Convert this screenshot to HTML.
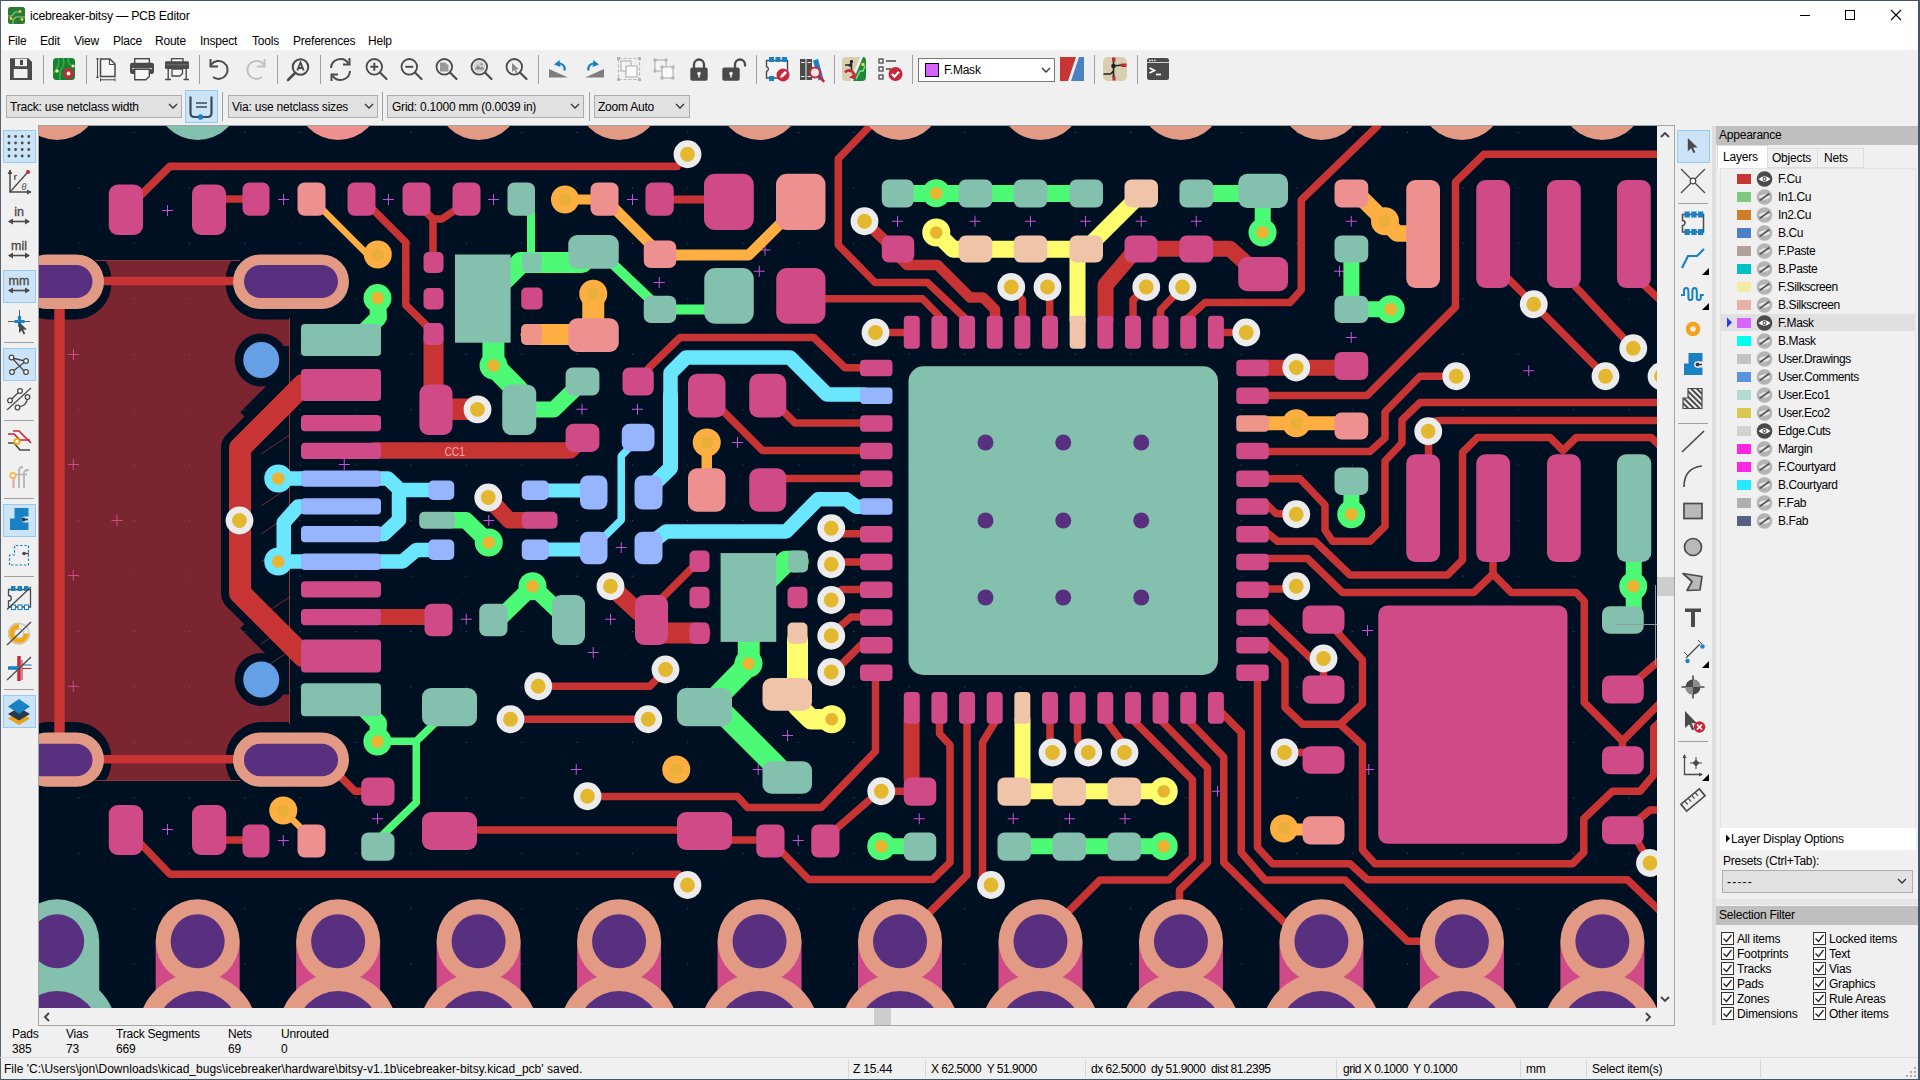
<!DOCTYPE html>
<html><head><meta charset="utf-8"><title>icebreaker-bitsy — PCB Editor</title><style>
*{box-sizing:border-box}
html,body{margin:0;padding:0}
body{width:1920px;height:1080px;overflow:hidden;background:#f0f0f0;font-family:"Liberation Sans",sans-serif;font-size:12px;color:#000;position:relative}
.a{position:absolute}
.t{position:absolute;white-space:nowrap;line-height:14px;font-size:12px;letter-spacing:-0.22px}
#title{left:0;top:0;width:1920px;height:30px;background:#fff}
#menu{left:0;top:30px;width:1920px;height:20px;background:#fff}
#cvw{left:39px;top:126px;width:1618px;height:882px;overflow:hidden;background:#001023}
.sep{position:absolute;width:1px;background:#a0a0a0}
.hsep{position:absolute;height:1px;background:#a0a0a0}
.combo{position:absolute;border:1px solid #adadad;background:#e1e1e1;height:23px}
.sel{position:absolute;background:#cce4f7;border:1px solid #99c9ef}
.chk{position:absolute;width:13px;height:13px;border:1px solid #333;background:#fff}
.sw{position:absolute;width:14px;height:10px}
</style></head><body>
<div class="a" id="title"></div><div class="a" id="menu"></div>
<div class="a" style="left:0;top:0;width:1920px;height:1px;background:#42566e"></div>
<div class="a" style="left:1918px;top:0;width:2px;height:1080px;background:#42566e"></div>
<div class="a" style="left:0;top:0;width:1px;height:1080px;background:#566272"></div>
<div class="a" style="left:0;top:1079px;width:1920px;height:1px;background:#42566e"></div>
<svg class="a" style="left:8px;top:7px" width="17" height="17" viewBox="0 0 17 17"><rect width="17" height="17" rx="2.500" fill="#2a7a36"/><path d="M0 9h4l3-4h4M5 17v-4l3-3h9" fill="none" stroke="#8fd07a" stroke-width="1.200"/><circle cx="3" cy="11.500" r="1.400" fill="#f2c94a"/><circle cx="12" cy="4.500" r="1.400" fill="#f2c94a"/><circle cx="14" cy="12.500" r="1.400" fill="#f2c94a"/></svg>
<div class="t" style="left:30px;top:9px;font-size:12.3px;letter-spacing:-0.25px">icebreaker-bitsy — PCB Editor</div>
<svg class="a" style="left:1790px;top:5px" width="120" height="20" viewBox="1790 5 120 20"><path d="M1800 15.5h10" stroke="#000" stroke-width="1"/><rect x="1845.5" y="10.5" width="9" height="9" fill="none" stroke="#000"/><path d="M1891 10l10 10M1901 10l-10 10" stroke="#000" stroke-width="1.1"/></svg>
<div class="t" style="left:8px;top:34px;">File</div>
<div class="t" style="left:40px;top:34px;">Edit</div>
<div class="t" style="left:74px;top:34px;">View</div>
<div class="t" style="left:113px;top:34px;">Place</div>
<div class="t" style="left:155px;top:34px;">Route</div>
<div class="t" style="left:200px;top:34px;">Inspect</div>
<div class="t" style="left:252px;top:34px;">Tools</div>
<div class="t" style="left:293px;top:34px;">Preferences</div>
<div class="t" style="left:368px;top:34px;">Help</div>
<div class="sep" style="left:43px;top:55px;height:29px"></div>
<div class="sep" style="left:86px;top:55px;height:29px"></div>
<div class="sep" style="left:199px;top:55px;height:29px"></div>
<div class="sep" style="left:277px;top:55px;height:29px"></div>
<div class="sep" style="left:320px;top:55px;height:29px"></div>
<div class="sep" style="left:538px;top:55px;height:29px"></div>
<div class="sep" style="left:756px;top:55px;height:29px"></div>
<div class="sep" style="left:834px;top:55px;height:29px"></div>
<div class="sep" style="left:912px;top:55px;height:29px"></div>
<div class="sep" style="left:1094px;top:55px;height:29px"></div>
<div class="sep" style="left:1137px;top:55px;height:29px"></div>
<div class="sep" style="left:222px;top:92px;height:29px"></div>
<div class="sep" style="left:382px;top:92px;height:29px"></div>
<div class="sep" style="left:589px;top:92px;height:29px"></div>
<svg class="a" style="left:0;top:50px" width="1200" height="40" viewBox="0 50 1200 40"><g transform="translate(10 58)"><path d="M0 0.300H18.300L22 4V22H0z" fill="#4a4a4a"/><rect x="5" y="0.800" width="12" height="7.400" fill="#f0f0f0"/><rect x="10" y="2" width="3" height="5" fill="#4a4a4a"/><rect x="3.750" y="11" width="13.750" height="9" fill="#f0f0f0"/></g><g transform="translate(53 58)"><rect x="0" y="0" width="22" height="22" rx="3.500" fill="#15822c"/><path d="M5 0q2 5 -1 10t-4 6M10 0q2 6 -1 10t-2 12M15.500 0q-1 4 1 6t5.500 2" stroke="#3fa550" stroke-width="1.600" fill="none"/><circle cx="4" cy="13" r="1.700" fill="#f5e9a0"/><circle cx="20" cy="8" r="1.500" fill="#f5e9a0"/><circle cx="15.500" cy="15.500" r="4.300" fill="none" stroke="#c8283c" stroke-width="3.400" stroke-dasharray="2.250 1.120"/><circle cx="15.500" cy="15.500" r="3.300" fill="none" stroke="#c8283c" stroke-width="2.200"/><circle cx="15.500" cy="15.500" r="1.900" fill="#f5f0e8"/></g><g transform="translate(96 58)"><path d="M4.500 1H14l5 5V18.500H4.500z" fill="#f6f6f6" stroke="#4a4a4a" stroke-width="1.500"/><path d="M13.500 1v5.500h5.500" fill="none" stroke="#4a4a4a" stroke-width="1.100"/><path d="M1.500 0.500V19.500M0 0.800h3M0 19.200h3M4.500 21.800H19M4.500 20.300v3M19 20.300v3" stroke="#4a4a4a" stroke-width="1" fill="none"/></g><g transform="translate(130 58)"><rect x="4.700" y="0.700" width="14.600" height="6" fill="#f6f6f6" stroke="#4a4a4a" stroke-width="1.400"/><rect x="0" y="4.700" width="24" height="11.300" rx="2.200" fill="#4a4a4a"/><path d="M2 10.600h20" stroke="#f0f0f0" stroke-width="0.900"/><path d="M4.700 11.300H19.300V18.500l-3.500 3.300H4.700z" fill="#f6f6f6" stroke="#4a4a4a" stroke-width="1.400"/></g><g transform="translate(165 58)"><rect x="6.500" y="0.700" width="11.500" height="4" fill="#f6f6f6" stroke="#4a4a4a" stroke-width="1.300"/><rect x="0" y="3.300" width="24" height="7.700" rx="1.300" fill="#4a4a4a"/><path d="M1 6.800h22" stroke="#7a7a7a" stroke-width="0.800"/><path d="M7 11H17.500V15.500l-2.500 2.500H7z" fill="#f6f6f6" stroke="#4a4a4a" stroke-width="1.300"/><path d="M3.200 11V21.500M21.200 11V21.500M0 21.500h6M18.500 21.500h5.500" stroke="#4a4a4a" stroke-width="1.400" fill="none"/></g><g transform="translate(208 58)"><path d="M3 7A9 9 0 1 1 5 19" fill="none" stroke="#4a4a4a" stroke-width="2" /><path d="M2.5 1v7.5h7.5" fill="none" stroke="#4a4a4a" stroke-width="2"/></g><g transform="translate(245 58)"><path d="M19 7A9 9 0 1 0 17 19" fill="none" stroke="#c0c0c0" stroke-width="2" /><path d="M19.5 1v7.5h-7.5" fill="none" stroke="#c0c0c0" stroke-width="2"/></g><g transform="translate(287 58)"><circle cx="13.5" cy="9" r="7.8" fill="none" stroke="#4a4a4a" stroke-width="2"/><path d="M8 15l-7 7" stroke="#4a4a4a" stroke-width="2.6" stroke-linecap="round"/><path d="M10.300 12.500l3.200-8 3.200 8M11.400 10h4.200" fill="none" stroke="#4a4a4a" stroke-width="1.900"/></g><g transform="translate(329 58)"><path d="M2 10A9.5 9.5 0 0 1 19.5 5.5M21 13A9.5 9.5 0 0 1 3.5 17.5" fill="none" stroke="#4a4a4a" stroke-width="2"/><path d="M20.5 0v6.5h-6.5M2.500 23v-6.5h6.5" fill="none" stroke="#4a4a4a" stroke-width="2"/></g><g transform="translate(365 58)"><circle cx="9.3" cy="8.800" r="7.800" fill="none" stroke="#4a4a4a" stroke-width="1.800"/><path d="M15 14.500l6.500 6.500" stroke="#4a4a4a" stroke-width="2.100" stroke-linecap="round"/><path d="M5.300 8.800h8M9.300 4.800v8" stroke="#4a4a4a" stroke-width="2"/></g><g transform="translate(400 58)"><circle cx="9.3" cy="8.800" r="7.800" fill="none" stroke="#4a4a4a" stroke-width="1.800"/><path d="M15 14.500l6.500 6.500" stroke="#4a4a4a" stroke-width="2.100" stroke-linecap="round"/><path d="M5.300 8.800h8" stroke="#4a4a4a" stroke-width="2"/></g><g transform="translate(435 58)"><circle cx="9.3" cy="8.800" r="7.800" fill="none" stroke="#4a4a4a" stroke-width="1.800"/><path d="M15 14.500l6.500 6.500" stroke="#4a4a4a" stroke-width="2.100" stroke-linecap="round"/><path d="M5 4.500h5.500l3 3V13.500H5z" fill="#9a9a9a"/></g><g transform="translate(470 58)"><circle cx="9.3" cy="8.800" r="7.800" fill="none" stroke="#4a4a4a" stroke-width="1.800"/><path d="M15 14.500l6.500 6.500" stroke="#4a4a4a" stroke-width="2.100" stroke-linecap="round"/><circle cx="9.300" cy="8.800" r="5.800" fill="#d0d0d0"/><path d="M4.500 11.500l3.500-4.500 2.500 3 1.500-1.500 2.500 3z" fill="#8a8a8a"/><circle cx="11.500" cy="6.300" r="1.100" fill="#8a8a8a"/></g><g transform="translate(505 58)"><circle cx="9.3" cy="8.800" r="7.800" fill="none" stroke="#4a4a4a" stroke-width="1.800"/><path d="M15 14.500l6.500 6.500" stroke="#4a4a4a" stroke-width="2.100" stroke-linecap="round"/><path d="M7 5v9l2.300-2.200 1.600 3.400 1.500-.7-1.600-3.300h3.200z" fill="#8a8a8a"/></g><g transform="translate(548 58)"><path d="M1 19.500h19L1 11z" fill="#7e7e7e"/><path d="M16.500 12.500A5.500 5.500 0 0 0 9.500 5.800" fill="none" stroke="#1a81c4" stroke-width="2.200"/><path d="M11.500 2L6 6.500l6.500 2.500z" fill="#1a81c4"/></g><g transform="translate(584 58)"><path d="M20 19.500H1L20 11z" fill="#7e7e7e"/><path d="M4.500 12.500A5.500 5.500 0 0 1 11.500 5.800" fill="none" stroke="#1a81c4" stroke-width="2.200"/><path d="M9.500 2l5.500 4.500-6.500 2.500z" fill="#1a81c4"/></g><g transform="translate(617 57)"><rect x="1.500" y="1.500" width="21" height="21" fill="none" stroke="#b4b4b4" stroke-width="1.200" stroke-dasharray="3 2"/><rect x="4" y="4" width="10" height="10" fill="#f4f4f4" stroke="#b4b4b4" stroke-width="1.200"/><rect x="9" y="9" width="11" height="11" fill="#fafafa" stroke="#b4b4b4" stroke-width="1.200"/><g fill="#b4b4b4"><rect x="0" y="0" width="3" height="3"/><rect x="21" y="0" width="3" height="3"/><rect x="0" y="21" width="3" height="3"/><rect x="21" y="21" width="3" height="3"/></g></g><g transform="translate(653 58)"><rect x="2" y="2" width="11" height="11" fill="#f4f4f4" stroke="#b4b4b4" stroke-width="1.200"/><rect x="9" y="9" width="11" height="11" fill="#fafafa" stroke="#b4b4b4" stroke-width="1.200"/><g fill="#b4b4b4"><rect x="0.500" y="0.500" width="3" height="3"/><rect x="11.500" y="0.500" width="3" height="3"/><rect x="0.500" y="11.500" width="3" height="3"/><rect x="7.500" y="7.500" width="3" height="3"/><rect x="18.500" y="7.500" width="3" height="3"/><rect x="7.500" y="18.500" width="3" height="3"/><rect x="18.500" y="18.500" width="3" height="3"/></g></g><g transform="translate(689 58)"><path d="M5 10V6.500a5 5 0 0 1 10 0V10" fill="none" stroke="#4a4a4a" stroke-width="2.300"/><rect x="1.300" y="9.500" width="17.400" height="13.200" rx="2" fill="#4a4a4a"/><circle cx="10" cy="15.500" r="1.800" fill="#f0f0f0"/><rect x="9.200" y="15.500" width="1.600" height="4" fill="#f0f0f0"/></g><g transform="translate(721 58)"><path d="M14 10V6.500a5 5 0 0 1 10 0V8.500" fill="none" stroke="#4a4a4a" stroke-width="2.300"/><rect x="1.300" y="9.500" width="17.400" height="13.200" rx="2" fill="#4a4a4a"/><circle cx="10" cy="15.500" r="1.800" fill="#f0f0f0"/><rect x="9.200" y="15.500" width="1.600" height="4" fill="#f0f0f0"/></g><g transform="translate(764 57)"><path d="M2.500 3.500h21V21h-21v-6.500a2.600 2.600 0 0 0 0-5z" fill="#f4f4f4" stroke="#4a4a4a" stroke-width="1.400"/><g fill="#1a81c4"><rect x="5" y="0" width="5" height="5"/><rect x="11.500" y="0" width="5" height="5"/><rect x="18" y="0" width="5" height="5"/><rect x="5" y="19" width="5" height="5"/></g><circle cx="19" cy="18" r="6.500" fill="#c8283c"/><path d="M16 21l1-3 4-4 2 2-4 4z" fill="#fff"/></g><g transform="translate(800 58)"><rect x="0" y="1" width="5.500" height="21" fill="#4a4a4a"/><rect x="6.500" y="1" width="5.500" height="21" fill="#4a4a4a"/><path d="M13 2.500l5-1.500 5.500 20-5 1.500z" fill="#1a81c4"/><path d="M1 4.500h3.500M7.500 4.500h3.500M1 18.500h3.500M7.500 18.500h3.500" stroke="#f0f0f0" stroke-width="1.200"/><circle cx="15" cy="14.500" r="5" fill="#fbe4e8" stroke="#c8283c" stroke-width="2"/><path d="M19 18.500l4.500 4.500" stroke="#c8283c" stroke-width="2.600" stroke-linecap="round"/></g><g transform="translate(842 57)"><path d="M0 4Q0 0 4 0H19L9 24H4Q0 24 0 20z" fill="#d8ceb0"/><path d="M21 0q3 0 3 4V20q0 4-4 4H11z" fill="#1e8a3a"/><path d="M19 0l-10 24" stroke="#f0f0f0" stroke-width="1.500"/><path d="M3 8h4M9.500 3v10M9.500 6l-3 3M9.500 10l-3-2" stroke="#222" stroke-width="1.500" fill="none"/><circle cx="9.500" cy="4.500" r="1.600" fill="#222"/><path d="M14 22l4-8h3l2-5" stroke="#8fe08f" stroke-width="1.300" fill="none"/><circle cx="21" cy="7.500" r="1.700" fill="#f2d94a"/><path d="M3 15.500a5 5 0 0 1 9 3" fill="none" stroke="#c8283c" stroke-width="2.600"/><path d="M14 16l-1 6.500-6-2z" fill="#c8283c"/></g><g transform="translate(878 58)"><g fill="none" stroke="#4a4a4a" stroke-width="1.300"><rect x="1" y="1" width="4" height="4"/><rect x="1" y="9" width="4" height="4"/><rect x="1" y="17" width="4" height="4"/><path d="M8 3h10M8 11h5"/></g><circle cx="17.500" cy="16" r="7" fill="#c8283c"/><path d="M14 16l2.500 2.700 4.500-5" fill="none" stroke="#fff" stroke-width="2.200"/></g><g transform="translate(1060 57)"><path d="M0 0h16L8 24H0z" fill="#c83434"/><path d="M19 0h5v24H11z" fill="#4d7fc4"/></g><g transform="translate(1103 57)"><rect x="0" y="0" width="24" height="24" rx="5" fill="#d8ceb0"/><path d="M0.500 17h7M10.500 3.500V21M10.500 9l8.500-1M10.500 14l-3 3M10.500 17l0.500 4" stroke="#222" stroke-width="1.600" fill="none"/><circle cx="10.500" cy="9" r="2.300" fill="#222"/><rect x="9" y="0.500" width="3.500" height="4" fill="#c8283c"/><rect x="18" y="6.500" width="5.500" height="3.500" fill="#c8283c"/><rect x="9.500" y="19.500" width="3" height="4" fill="#c8283c"/></g><g transform="translate(1147 58)"><rect x="0" y="0" width="22" height="22" rx="2.500" fill="#4a4a4a"/><path d="M0 4.500h22" stroke="#f0f0f0" stroke-width="0.800"/><path d="M2.500 10l5 2.500-5 2.500" fill="none" stroke="#fff" stroke-width="1.700"/><path d="M9 16.500h5" stroke="#fff" stroke-width="1.700"/><g fill="#f0f0f0"><rect x="2" y="1.700" width="1.500" height="1.500"/><rect x="4.500" y="1.700" width="1.500" height="1.500"/><rect x="7" y="1.700" width="1.500" height="1.500"/></g></g></svg>
<div class="a" style="left:918px;top:58px;width:137px;height:24px;border:1px solid #7a7a7a;background:#fff"></div>
<div class="a" style="left:925px;top:63px;width:14px;height:14px;background:#d864ff;border:1px solid #000"></div>
<div class="t" style="left:944px;top:63px;">F.Mask</div>
<svg class="a" style="left:1041px;top:67px" width="10" height="7" viewBox="0 0 10 7"><path d="M1 1l4 4 4-4" fill="none" stroke="#333" stroke-width="1.3"/></svg>
<div class="combo" style="left:6px;top:95px;width:176px"></div><div class="t" style="left:10px;top:100px;">Track: use netclass width</div><svg class="a" style="left:168px;top:103px" width="10" height="7" viewBox="0 0 10 7"><path d="M1 1l4 4 4-4" fill="none" stroke="#333" stroke-width="1.3"/></svg>
<div class="sel" style="left:185px;top:90px;width:33px;height:33px"></div>
<div class="combo" style="left:228px;top:95px;width:150px"></div><div class="t" style="left:232px;top:100px;">Via: use netclass sizes</div><svg class="a" style="left:364px;top:103px" width="10" height="7" viewBox="0 0 10 7"><path d="M1 1l4 4 4-4" fill="none" stroke="#333" stroke-width="1.3"/></svg>
<div class="combo" style="left:387px;top:95px;width:197px"></div><div class="t" style="left:392px;top:100px;">Grid: 0.1000 mm (0.0039 in)</div><svg class="a" style="left:570px;top:103px" width="10" height="7" viewBox="0 0 10 7"><path d="M1 1l4 4 4-4" fill="none" stroke="#333" stroke-width="1.3"/></svg>
<div class="combo" style="left:594px;top:95px;width:96px"></div><div class="t" style="left:598px;top:100px;">Zoom Auto</div><svg class="a" style="left:675px;top:103px" width="10" height="7" viewBox="0 0 10 7"><path d="M1 1l4 4 4-4" fill="none" stroke="#333" stroke-width="1.3"/></svg>
<svg class="a" style="left:185px;top:90px" width="33" height="33" viewBox="185 90 33 33"><path d="M190.500 96.500V113q0 4 4 4h13q4 0 4-4V96.500" fill="none" stroke="#3a4a5a" stroke-width="2.200"/><path d="M196 103h11M196 107h11" stroke="#3a4a5a" stroke-width="1.300"/><circle cx="200.500" cy="117" r="2.700" fill="#1a81c4"/></svg>
<div class="sel" style="left:3px;top:130px;width:33px;height:33px"></div>
<div class="sel" style="left:3px;top:270px;width:33px;height:33px"></div>
<div class="sel" style="left:3px;top:348px;width:33px;height:33px"></div>
<div class="sel" style="left:3px;top:504px;width:33px;height:33px"></div>
<div class="sel" style="left:3px;top:695px;width:33px;height:33px"></div>
<div class="hsep" style="left:4px;top:342px;width:30px"></div>
<div class="hsep" style="left:4px;top:420px;width:30px"></div>
<div class="hsep" style="left:4px;top:498px;width:30px"></div>
<div class="hsep" style="left:4px;top:576px;width:30px"></div>
<div class="hsep" style="left:4px;top:689px;width:30px"></div>
<svg class="a" style="left:0;top:126px" width="38" height="610" viewBox="0 126 38 610" font-family="Liberation Sans, sans-serif"><circle cx="9.0" cy="136.5" r="1.400" fill="#4a4a4a"/><circle cx="9.0" cy="143.0" r="1.400" fill="#4a4a4a"/><circle cx="9.0" cy="149.5" r="1.400" fill="#4a4a4a"/><circle cx="9.0" cy="156.0" r="1.400" fill="#4a4a4a"/><circle cx="15.6" cy="136.5" r="1.400" fill="#4a4a4a"/><circle cx="15.6" cy="143.0" r="1.400" fill="#4a4a4a"/><circle cx="15.6" cy="149.5" r="1.400" fill="#4a4a4a"/><circle cx="15.6" cy="156.0" r="1.400" fill="#4a4a4a"/><circle cx="22.2" cy="136.5" r="1.400" fill="#4a4a4a"/><circle cx="22.2" cy="143.0" r="1.400" fill="#4a4a4a"/><circle cx="22.2" cy="149.5" r="1.400" fill="#4a4a4a"/><circle cx="22.2" cy="156.0" r="1.400" fill="#4a4a4a"/><circle cx="28.799999999999997" cy="136.5" r="1.400" fill="#4a4a4a"/><circle cx="28.799999999999997" cy="143.0" r="1.400" fill="#4a4a4a"/><circle cx="28.799999999999997" cy="149.5" r="1.400" fill="#4a4a4a"/><circle cx="28.799999999999997" cy="156.0" r="1.400" fill="#4a4a4a"/><path d="M10 170v22h21" fill="none" stroke="#4a4a4a" stroke-width="1.500"/><path d="M10 192l17-19" stroke="#4a4a4a" stroke-width="1.300"/><circle cx="28" cy="172" r="2" fill="#c8283c"/><path d="M7.500 174l2.500-4.500 2.500 4.500zM27 189.500l4.500 2.500-4.500 2.500z" fill="#4a4a4a"/><text x="13.500" y="180" font-size="9" font-weight="bold" fill="#4a4a4a">r</text><text x="21.500" y="190" font-size="9" font-style="italic" fill="#4a4a4a">θ</text><text x="19" y="216" font-size="12.500" fill="#4a4a4a" stroke="#4a4a4a" stroke-width="0.300" text-anchor="middle">in</text><path d="M9 221.5h20" stroke="#4a4a4a" stroke-width="1.600"/><path d="M8 221.5l5-3v6zM30 221.5l-5-3v6z" fill="#4a4a4a"/><text x="19" y="250" font-size="12.500" fill="#4a4a4a" stroke="#4a4a4a" stroke-width="0.300" text-anchor="middle">mil</text><path d="M9 255.5h20" stroke="#4a4a4a" stroke-width="1.600"/><path d="M8 255.5l5-3v6zM30 255.5l-5-3v6z" fill="#4a4a4a"/><text x="19" y="285" font-size="12.500" fill="#4a4a4a" stroke="#4a4a4a" stroke-width="0.300" text-anchor="middle">mm</text><path d="M9 290.5h20" stroke="#4a4a4a" stroke-width="1.600"/><path d="M8 290.5l5-3v6zM30 290.5l-5-3v6z" fill="#4a4a4a"/><path d="M8 321.500h22M19.500 310v22" stroke="#4a4a4a" stroke-width="0.900"/><path d="M19.500 316v11M14.500 321.500h10" stroke="#1a81c4" stroke-width="3.200"/><path d="M19 322v11l2.600-2.500 2 4 1.700-.8-2-4 3.700-.2z" fill="#4a4a4a"/><path d="M12 358l13 14M12 372l14-11M12 358l13 3" stroke="#4a4a4a" stroke-width="1.300"/><g fill="#fff" stroke="#4a4a4a" stroke-width="1.300"><circle cx="11.500" cy="357.500" r="2.300"/><circle cx="26" cy="361" r="2.300"/><circle cx="12" cy="372" r="2.300"/><circle cx="26" cy="372" r="2.300"/></g><path d="M7 410L31 388" stroke="#4a4a4a" stroke-width="1.200"/><path d="M10.500 400l8.500-8M18 407q9-1 9.500-9" fill="none" stroke="#4a4a4a" stroke-width="1.300"/><g fill="#fff" stroke="#4a4a4a" stroke-width="1.300"><circle cx="10" cy="400.500" r="2.300"/><circle cx="20" cy="391" r="2.300"/><circle cx="17.500" cy="407.500" r="2.300"/><circle cx="27.500" cy="397" r="2.300"/></g><path d="M8 434l6 0 6 6h10" fill="none" stroke="#c8283c" stroke-width="1.700"/><path d="M13 431h6l7 7 5 5" fill="none" stroke="#c8283c" stroke-width="1.700"/><path d="M8 443h6l6 7h10" fill="none" stroke="#4a4a4a" stroke-width="1.700"/><circle cx="17" cy="441.500" r="2.600" fill="#fff" stroke="#f5a800" stroke-width="1.800"/><path d="M19 488v-17q0-4 4-4M24 488v-14q0-4 4-4h1" fill="none" stroke="#b4b4b4" stroke-width="1.800"/><path d="M13.500 478v10" stroke="#e9a3b0" stroke-width="2"/><path d="M13 474.500h14" stroke="#b4b4b4" stroke-width="1.600"/><circle cx="13" cy="475.500" r="2.700" fill="#fff" stroke="#f5b84a" stroke-width="1.700"/><path d="M10 530V518.500h4.500V508h14v8.500h-4a3 3 0 0 0 0 6h4V530z" fill="#1a81c4"/><path d="M23 519.500h5" stroke="#2a3a4a" stroke-width="1.600"/><circle cx="23.500" cy="519.500" r="2" fill="#2a3a4a"/><path d="M9.500 565V555h5V545.500h14V565z" fill="none" stroke="#1a81c4" stroke-width="1.200" stroke-dasharray="2.500 1.800"/><path d="M24 553.500h5" stroke="#4a4a4a" stroke-width="1.400"/><circle cx="24" cy="553.500" r="1.800" fill="#4a4a4a"/><path d="M8.500 589.500h22V607h-22v-6a2.500 2.500 0 0 0 0-5.500z" fill="none" stroke="#4a4a4a" stroke-width="1.300"/><g fill="#1a81c4"><rect x="11" y="586" width="4.500" height="5"/><rect x="17.500" y="586" width="4.500" height="5"/><rect x="24" y="586" width="4.500" height="5"/></g><g fill="#fff" stroke="#1a81c4" stroke-width="1.100"><rect x="11.500" y="605" width="4" height="4.500"/><rect x="18" y="605" width="4" height="4.500"/><rect x="24.500" y="605" width="4" height="4.500"/></g><path d="M7 609.500L31 587" stroke="#4a4a4a" stroke-width="1.300"/><path d="M19 622.500a11 11 0 1 0 11 11h-11z" fill="#f5a800"/><circle cx="19" cy="633.500" r="10" fill="none" stroke="#c8c8c8" stroke-width="1.400"/><circle cx="19" cy="633.500" r="4.500" fill="#f0f0f0" stroke="#c8c8c8" stroke-width="1.400"/><path d="M7 645L31 622" stroke="#4a4a4a" stroke-width="1.300"/><path d="M19 656v25" stroke="#c8283c" stroke-width="3.500"/><path d="M8 668h11" stroke="#1a81c4" stroke-width="3.500"/><path d="M22 660v20M22.500 668.500h9" stroke="#c8283c" stroke-width="1.100"/><path d="M22.500 665h9" stroke="#1a81c4" stroke-width="1.100"/><path d="M7 680L31 657" stroke="#4a4a4a" stroke-width="1.300"/><path d="M19 712l11 6.500-11 6.500-11-6.500z" fill="#e8a21a"/><path d="M19 707.500l11 6.500-11 6.500-11-6.500z" fill="#2a3a4a"/><path d="M19 699l11 7.500-11 7.500-11-7.500z" fill="#1a81c4"/></svg>
<div class="a" id="cvw"><svg id="cv" width="1618" height="882" viewBox="39 126 1618 882" font-family="Liberation Sans, sans-serif">
<rect x="38" y="125" width="1619" height="883" fill="#001023"/>
<defs><pattern id="gd" x="78.2" y="132" width="55.37" height="55.45" patternUnits="userSpaceOnUse"><rect x="0" y="0" width="1" height="1" fill="#8090a5"/></pattern></defs>
<g><rect x="38" y="261" width="251.5" height="519" fill="#7b2530"/><polygon points="310,385 303,385 240,448 240,593 303,656 310,656" fill="#001023"/><polyline points="310,385 303,385 240,448 240,593 303,656 310,656" stroke="#001023" stroke-width="38" fill="none" stroke-linejoin="round"/><rect x="12.5" y="244" width="99" height="75.5" rx="36.5" fill="#001023"/><rect x="12.5" y="722" width="99" height="75.25" rx="36.5" fill="#001023"/><rect x="225.5" y="244" width="131" height="75.5" rx="36.5" fill="#001023"/><rect x="225.5" y="722" width="131" height="75.25" rx="36.5" fill="#001023"/><circle cx="261.25" cy="360" r="26.5" fill="#001023"/><circle cx="261.25" cy="679.5" r="26.5" fill="#001023"/><polygon points="268,346 289.5,346 289.5,385 268,385" fill="#001023"/><polyline points="287,371 243,415" stroke="#001023" stroke-width="8" fill="none"/><polygon points="268,694.5 289.5,694.5 289.5,655.5 268,655.5" fill="#001023"/><polyline points="287,669.5 243,625.5" stroke="#001023" stroke-width="8" fill="none"/><path d="M289.5 318V724M95 260.500H240M95 780.500H240" stroke="#8a3b3b" stroke-width="1"/><path d="M261 454L289.5 435" stroke="#7a2a30" stroke-width="1"/><path d="M261 506L289.5 487" stroke="#7a2a30" stroke-width="1"/><path d="M261 534L289.5 515" stroke="#7a2a30" stroke-width="1"/><path d="M261 562L289.5 543" stroke="#7a2a30" stroke-width="1"/><path d="M261 616L289.5 597" stroke="#7a2a30" stroke-width="1"/><path d="M261 644L289.5 625" stroke="#7a2a30" stroke-width="1"/><path d="M261 670L289.5 651" stroke="#7a2a30" stroke-width="1"/></g>
<rect x="38" y="126" width="1619" height="882" fill="url(#gd)" opacity="0.55"/>
<g fill="none"><path d="M162 210.5h11M167.5 205v11" stroke="#c850d8" stroke-width="1"/><path d="M278 199.5h11M283.5 194v11" stroke="#c850d8" stroke-width="1"/><path d="M383 199.5h11M388.5 194v11" stroke="#c850d8" stroke-width="1"/><path d="M488 199.5h11M493.5 194v11" stroke="#c850d8" stroke-width="1"/><path d="M68 354.5h11M73.5 349v11" stroke="#d04a88" stroke-width="1"/><path d="M627 199.5h11M632.5 194v11" stroke="#c850d8" stroke-width="1"/><path d="M759.5 250h11M765 244.5v11" stroke="#c850d8" stroke-width="1"/><path d="M753.75 271.25h11M759.25 265.75v11" stroke="#c850d8" stroke-width="1"/><path d="M653.75 282.5h11M659.25 277v11" stroke="#c850d8" stroke-width="1"/><path d="M892 221.25h11M897.5 215.75v11" stroke="#c850d8" stroke-width="1"/><path d="M969.5 221.25h11M975 215.75v11" stroke="#c850d8" stroke-width="1"/><path d="M1025 221.25h11M1030.5 215.75v11" stroke="#c850d8" stroke-width="1"/><path d="M1080 221.25h11M1085.5 215.75v11" stroke="#c850d8" stroke-width="1"/><path d="M1135.75 221.25h11M1141.25 215.75v11" stroke="#c850d8" stroke-width="1"/><path d="M1190.75 221.25h11M1196.25 215.75v11" stroke="#c850d8" stroke-width="1"/><path d="M1345.75 221.25h11M1351.25 215.75v11" stroke="#c850d8" stroke-width="1"/><path d="M1334 271.25h11M1339.5 265.75v11" stroke="#c850d8" stroke-width="1"/><path d="M1345.75 337.5h11M1351.25 332v11" stroke="#c850d8" stroke-width="1"/><path d="M1523.25 370.75h11M1528.75 365.25v11" stroke="#c850d8" stroke-width="1"/><path d="M338.75 464.5h11M344.25 459v11" stroke="#c850d8" stroke-width="1"/><path d="M67.75 464.5h11M73.25 459v11" stroke="#d04a88" stroke-width="1"/><path d="M111.5 520.5h11M117 515v11" stroke="#d04a88" stroke-width="1"/><path d="M67.75 575.5h11M73.25 570v11" stroke="#d04a88" stroke-width="1"/><path d="M67.75 686.25h11M73.25 680.75v11" stroke="#d04a88" stroke-width="1"/><path d="M483.25 520.5h11M488.75 515v11" stroke="#c850d8" stroke-width="1"/><path d="M460.75 619.25h11M466.25 613.75v11" stroke="#c850d8" stroke-width="1"/><path d="M576.5 409.25h11M582 403.75v11" stroke="#c850d8" stroke-width="1"/><path d="M632 409.25h11M637.5 403.75v11" stroke="#c850d8" stroke-width="1"/><path d="M732 442.5h11M737.5 437v11" stroke="#c850d8" stroke-width="1"/><path d="M615.75 547.5h11M621.25 542v11" stroke="#c850d8" stroke-width="1"/><path d="M605 619.25h11M610.5 613.75v11" stroke="#c850d8" stroke-width="1"/><path d="M587.75 652.5h11M593.25 647v11" stroke="#c850d8" stroke-width="1"/><path d="M1362 630.5h11M1367.5 625v11" stroke="#c850d8" stroke-width="1"/><path d="M162 829.5h11M167.5 824v11" stroke="#c850d8" stroke-width="1"/><path d="M277.75 840.5h11M283.25 835v11" stroke="#c850d8" stroke-width="1"/><path d="M372 818.75h11M377.5 813.25v11" stroke="#c850d8" stroke-width="1"/><path d="M782 735.5h11M787.5 730v11" stroke="#c850d8" stroke-width="1"/><path d="M570.75 769.5h11M576.25 764v11" stroke="#c850d8" stroke-width="1"/><path d="M752.75 769.5h11M758.25 764v11" stroke="#c850d8" stroke-width="1"/><path d="M792.75 840.5h11M798.25 835v11" stroke="#c850d8" stroke-width="1"/><path d="M913.75 818.75h11M919.25 813.25v11" stroke="#c850d8" stroke-width="1"/><path d="M1007.75 818.75h11M1013.25 813.25v11" stroke="#c850d8" stroke-width="1"/><path d="M1064 818.75h11M1069.5 813.25v11" stroke="#c850d8" stroke-width="1"/><path d="M1119.5 818.75h11M1125 813.25v11" stroke="#c850d8" stroke-width="1"/><path d="M1363.25 769.5h11M1368.75 764v11" stroke="#c850d8" stroke-width="1"/><path d="M1212 791.25h11M1217.5 785.75v11" stroke="#c850d8" stroke-width="1"/></g>
<g fill="none" stroke-linecap="round" stroke-linejoin="round"><polyline points="104,281 233,281" stroke="#c83434" stroke-width="8.5"/><polyline points="104,759.25 233,759.25" stroke="#c83434" stroke-width="8.5"/><polyline points="59.5,305 59.5,736" stroke="#c83434" stroke-width="10.5"/><polyline points="310,385 303,385 240,448 240,593 303,656 310,656" stroke="#c83434" stroke-width="22"/><polyline points="140,196 170,166.3 677,166.3" stroke="#c83434" stroke-width="7.8"/><polyline points="224,199 245,199" stroke="#c83434" stroke-width="7.5"/><polyline points="369,205.5 405.8,242.3 405.8,305 433,332" stroke="#c83434" stroke-width="7.5"/><polyline points="424,210 433,219 442,219 458,208" stroke="#c83434" stroke-width="7.5"/><polyline points="433,219 433,256" stroke="#c83434" stroke-width="7.5"/><polyline points="433.5,336 433.5,420" stroke="#c83434" stroke-width="20"/><polyline points="670,199.5 708,199.5" stroke="#c83434" stroke-width="8"/><polyline points="648.75,368 680,337.5 813.75,337.5 845,367.8 864,367.8" stroke="#c83434" stroke-width="7.5"/><polyline points="870,126 838.25,158.75 838.25,245 875,282.5 927.5,282.5 967,320" stroke="#c83434" stroke-width="7.5"/><polyline points="864.5,221.25 895,250" stroke="#c83434" stroke-width="11"/><polyline points="900,258 907,265 937.5,265 970,297.5 983,297.5 995,309.5 995,320" stroke="#c83434" stroke-width="10.5"/><polyline points="822,298.75 922.5,298.75 939.5,316.25 939.5,322" stroke="#c83434" stroke-width="7.5"/><polyline points="885,332.5 908,332.5" stroke="#c83434" stroke-width="7.5"/><polyline points="1140,248.75 1230,248.75 1247,264" stroke="#c83434" stroke-width="16"/><polyline points="1132,254 1105.6,285 1105.6,320" stroke="#c83434" stroke-width="16"/><polyline points="1011,287 1022.5,300 1022.5,320" stroke="#c83434" stroke-width="7.5"/><polyline points="1047.5,287 1049.7,300 1049.7,320" stroke="#c83434" stroke-width="7.5"/><polyline points="1146,287 1133,300 1133,320" stroke="#c83434" stroke-width="7.5"/><polyline points="1182.5,287 1160.5,310 1160.5,320" stroke="#c83434" stroke-width="7.5"/><polyline points="1220,332.5 1240,332.5" stroke="#c83434" stroke-width="7.5"/><polyline points="1188,318 1205,302.5 1290,302.5 1301.25,290 1301.25,200 1377.5,126" stroke="#c83434" stroke-width="7.5"/><polyline points="1268,395.5 1367,395.5 1455.5,307 1455.5,182 1484,154.25 1660,154.25" stroke="#c83434" stroke-width="7.5"/><polyline points="1250,367.7 1340,367.7" stroke="#c83434" stroke-width="16"/><polyline points="1456,376.25 1420,376.25 1385,412 1385,438 1370,451.5 1265,451.5" stroke="#c83434" stroke-width="7.5"/><polyline points="1509,279.5 1533.75,304.25 1605.5,376.25" stroke="#c83434" stroke-width="7.5"/><polyline points="1573,284 1633.25,348.25" stroke="#c83434" stroke-width="7.5"/><polyline points="1645,286 1660,300" stroke="#c83434" stroke-width="7.5"/><polyline points="375,450.5 570,450.5 582,439" stroke="#c83434" stroke-width="16.5"/><polyline points="440,409.3 470,409.3" stroke="#c83434" stroke-width="21.5"/><polyline points="488.25,497.5 509,520.3 530,520.3" stroke="#c83434" stroke-width="16.5"/><polyline points="375,617 430,617" stroke="#c83434" stroke-width="16"/><polyline points="722,410 762.5,450.5 864,450.5" stroke="#c83434" stroke-width="7.5"/><polyline points="783,411 795,423 864,423" stroke="#c83434" stroke-width="7.5"/><polyline points="780,478.5 864,478.5" stroke="#c83434" stroke-width="7.5"/><polyline points="838,533.75 864,533.75" stroke="#c83434" stroke-width="7.5"/><polyline points="838,562 864,562" stroke="#c83434" stroke-width="7.5"/><polyline points="836,593 842,589.5 864,589.5" stroke="#c83434" stroke-width="7.5"/><polyline points="836,630 851,617 864,617" stroke="#c83434" stroke-width="7.5"/><polyline points="840,666 861,645 866,645" stroke="#c83434" stroke-width="7.5"/><polyline points="610.5,586.25 645,618" stroke="#c83434" stroke-width="17.5"/><polyline points="660,600 696,564" stroke="#c83434" stroke-width="7.5"/><polyline points="660,633 700,633" stroke="#c83434" stroke-width="21"/><polyline points="1660,402.5 1420,402.5 1402,420 1402,443 1385,461 1385,526.25 1370,541.25 1332.5,541.25 1325,530 1325,505 1300,478.75 1265,478.75" stroke="#c83434" stroke-width="7.5"/><polyline points="1428.25,422 1440,420.5 1660,420.5" stroke="#c83434" stroke-width="7.5"/><polyline points="1428.5,440 1428.5,458" stroke="#c83434" stroke-width="7.5"/><polyline points="1265,503 1276,513.5 1290,514.25" stroke="#c83434" stroke-width="7.5"/><polyline points="1265,531 1277.5,541.25 1315,541.25 1350,575 1447.5,575 1462.5,560 1462.5,452.5 1477.5,437.5 1550,437.5 1563,450.5 1576.25,437.5 1651.25,437.5 1660,446" stroke="#c83434" stroke-width="7.5"/><polyline points="1265,558.5 1307.5,558.5 1342.5,592.5 1473.75,592.5 1493,574 1493,560" stroke="#c83434" stroke-width="7.5"/><polyline points="1493,574 1511.25,592.5 1576.25,592.5 1584.25,601.25 1584.25,702.5 1622.5,741 1660,703" stroke="#c83434" stroke-width="7.5"/><polyline points="1265,589 1290,589" stroke="#c83434" stroke-width="7.5"/><polyline points="1265,614.5 1312.5,660 1320,668" stroke="#c83434" stroke-width="7.5"/><polyline points="1265,642 1285,661 1285,707.5 1302.5,724.25 1340,724.25 1362.5,703.75 1362.5,660 1337.5,632.5" stroke="#c83434" stroke-width="7.5"/><polyline points="1340,724.25 1362.5,745 1362.5,850 1375,863.75 1572.5,863.75 1583.75,852.5 1583.75,818.75 1612.5,791.25 1640,791.25 1653.75,775 1653.75,727.5 1660,722" stroke="#c83434" stroke-width="7.5"/><polyline points="341.25,777.5 355,791.25 365,791.25" stroke="#c83434" stroke-width="7.5"/><polyline points="224,840 245,840" stroke="#c83434" stroke-width="7.5"/><polyline points="140,843 170,874.25 678.75,874.25 687.5,885" stroke="#c83434" stroke-width="7.5"/><polyline points="470,830 680,830" stroke="#c83434" stroke-width="7.5"/><polyline points="538.25,686.25 650,686.25 665.5,669.5" stroke="#c83434" stroke-width="7.5"/><polyline points="510.5,719.25 648.25,719.25" stroke="#c83434" stroke-width="7.5"/><polyline points="875.5,676 875.5,751.25 821.25,807.5 747.5,807.5 737.5,796.5 587.5,796.5" stroke="#c83434" stroke-width="7.5"/><polyline points="728,840 760,840" stroke="#c83434" stroke-width="7.5"/><polyline points="781,851 808.75,879.5 932.5,879.5 950,862.5 950,745 939.5,733.75 939.5,720" stroke="#c83434" stroke-width="7.5"/><polyline points="836,829 874,796" stroke="#c83434" stroke-width="7.5"/><polyline points="881.25,791.25 906,791.25" stroke="#c83434" stroke-width="7.5"/><polyline points="911.6,720 911.6,780" stroke="#c83434" stroke-width="16"/><polyline points="967,720 967,875 925,917" stroke="#c83434" stroke-width="7.5"/><polyline points="995,722 982.5,742.5 982.5,877.5 991,885" stroke="#c83434" stroke-width="7.5"/><polyline points="1050,720 1050,745" stroke="#c83434" stroke-width="7.5"/><polyline points="1077.5,720 1077.5,740 1084,748" stroke="#c83434" stroke-width="7.5"/><polyline points="1105.5,720 1124.5,745" stroke="#c83434" stroke-width="7.5"/><polyline points="1133,720 1192.5,780 1192.5,857.5 1168.75,880 1100,880 1068,912" stroke="#c83434" stroke-width="7.5"/><polyline points="1160.5,720 1207.5,768 1207.5,862.5 1179.5,890 1179.5,905" stroke="#c83434" stroke-width="7.5"/><polyline points="1188,720 1223.75,757 1223.75,862.5 1287,925" stroke="#c83434" stroke-width="7.5"/><polyline points="1220,711 1241.25,732.5 1241.25,852.5 1265,880 1345,880 1407.5,941.25 1430,941.25" stroke="#c83434" stroke-width="7.5"/><polyline points="1257.5,676 1257.5,847.5 1272.5,863.75 1350,863.75 1367.5,879.7 1627.5,879.7 1660,911" stroke="#c83434" stroke-width="7.5"/><polyline points="1323.5,665 1323.5,680" stroke="#c83434" stroke-width="7.5"/><polyline points="1290,752.5 1306,752.5" stroke="#c83434" stroke-width="7.5"/><polyline points="1638,679 1660,660" stroke="#c83434" stroke-width="7.5"/><polyline points="1622.5,740 1622.5,750" stroke="#c83434" stroke-width="7.5"/><polyline points="1638,820 1650,810 1660,810" stroke="#c83434" stroke-width="7.5"/><polyline points="1638,842 1650,863" stroke="#c83434" stroke-width="7.5"/></g>
<g fill="none" stroke-linecap="round" stroke-linejoin="round"><polyline points="320,207 367.6,254.5 377.8,254.5" stroke="#ffae42" stroke-width="6.5"/><polyline points="377.5,298 378.5,317.5 362,334" stroke="#4dfa76" stroke-width="17"/><polyline points="565,199.5 600,199.5" stroke="#ffae42" stroke-width="10"/><polyline points="612,206 652,246 655,255 748.75,255 782,222" stroke="#ffae42" stroke-width="10.8"/><polyline points="531,212 531,255" stroke="#4dfa76" stroke-width="8"/><polyline points="521,262.5 582,262.5" stroke="#4dfa76" stroke-width="21"/><polyline points="521,262.5 505,278.5" stroke="#4dfa76" stroke-width="21"/><polyline points="612,263 652,301" stroke="#4dfa76" stroke-width="10"/><polyline points="672,309.5 708,309.5" stroke="#4dfa76" stroke-width="10"/><polyline points="593.25,293.75 593.25,325" stroke="#ffae42" stroke-width="22"/><polyline points="531,334.5 575,334.5" stroke="#ffae42" stroke-width="21"/><polyline points="670.5,400 670.5,373 686,357.5 790,357.5 827,394.5 864,394.5" stroke="#6ae6ff" stroke-width="14.5"/><polyline points="910,193.5 1075,193.5" stroke="#4dfa76" stroke-width="17"/><polyline points="936.25,232.5 953,249.3 1086,249.3" stroke="#fffd6e" stroke-width="17"/><polyline points="1210,193.5 1242,193.5" stroke="#4dfa76" stroke-width="17"/><polyline points="1262.75,205 1262.75,232.5" stroke="#4dfa76" stroke-width="16"/><polyline points="1086,248.75 1140,195" stroke="#fffd6e" stroke-width="16"/><polyline points="1077.5,248.75 1077.5,320" stroke="#fffd6e" stroke-width="16"/><polyline points="1353,189.5 1385,221.25 1397,233.4 1412,233.4" stroke="#ffae42" stroke-width="16.5"/><polyline points="1351.4,255 1351.4,300" stroke="#4dfa76" stroke-width="16"/><polyline points="1360,309.25 1390.75,309.25" stroke="#4dfa76" stroke-width="16"/><polyline points="278.25,478.5 388,478.5 400,490 435,490" stroke="#6ae6ff" stroke-width="14.5"/><polyline points="400,490 399,495 399,520 384,534 370,534" stroke="#6ae6ff" stroke-width="14.5"/><polyline points="305,506.5 298,506.5 283.75,522.5 283.75,552 278.25,561.5" stroke="#6ae6ff" stroke-width="14.5"/><polyline points="278.25,561.5 402.5,561.5 416.25,550 435,550" stroke="#6ae6ff" stroke-width="14.5"/><polyline points="493.4,340 493.5,365.6 517.5,390" stroke="#4dfa76" stroke-width="22"/><polyline points="450,520.3 466,520.3 488.75,542.5" stroke="#4dfa76" stroke-width="16.5"/><polyline points="530,409.4 553.75,409.4 577,387" stroke="#4dfa76" stroke-width="16"/><polyline points="670.5,395 670.5,468 652,486" stroke="#6ae6ff" stroke-width="15"/><polyline points="628,449 621.25,456 621.25,520 603,538" stroke="#6ae6ff" stroke-width="7.5"/><polyline points="535,490.5 590,490.5" stroke="#6ae6ff" stroke-width="14"/><polyline points="706.75,442.5 706.75,475" stroke="#ffae42" stroke-width="10.5"/><polyline points="535,549.5 590,549.5" stroke="#6ae6ff" stroke-width="14"/><polyline points="655,540 666,531.5 786.25,531.5 818,499.25 846.25,499.25 856.25,506.75 866,506.75" stroke="#6ae6ff" stroke-width="14.5"/><polyline points="798,561.5 786,561.5 766,581.5" stroke="#4dfa76" stroke-width="21.5"/><polyline points="797.5,640 797.5,690" stroke="#fffd6e" stroke-width="21"/><polyline points="748.75,640 748.75,664.5" stroke="#4dfa76" stroke-width="22"/><polyline points="532.5,586.25 500,618" stroke="#4dfa76" stroke-width="16.5"/><polyline points="532.5,586.25 565,617" stroke="#4dfa76" stroke-width="16.5"/><polyline points="1255,423.25 1345,423.25" stroke="#ffae42" stroke-width="14"/><polyline points="1351.4,490 1351.4,514.25" stroke="#4dfa76" stroke-width="16"/><polyline points="1633.75,555 1633.75,612" stroke="#4dfa76" stroke-width="16"/><polyline points="377.4,741.5 378.5,723 362,706.5" stroke="#4dfa76" stroke-width="17"/><polyline points="377,741.25 416.25,741.25 434,724" stroke="#4dfa76" stroke-width="7.5"/><polyline points="416.25,741.25 416.25,802.5 382.5,835" stroke="#4dfa76" stroke-width="7.5"/><polyline points="283.25,810.5 300,827" stroke="#ffae42" stroke-width="6.5"/><polyline points="748.75,664.5 712,702" stroke="#4dfa76" stroke-width="22"/><polyline points="725,715 778,768" stroke="#4dfa76" stroke-width="22"/><polyline points="797.5,706 811,719.25 831.75,719.25" stroke="#fffd6e" stroke-width="20.5"/><polyline points="881.25,846.25 906,846.25" stroke="#4dfa76" stroke-width="16"/><polyline points="1022.5,720 1022.5,791.25 1163.75,791.25" stroke="#fffd6e" stroke-width="16"/><polyline points="1010,846.25 1163.75,846.25" stroke="#4dfa76" stroke-width="16"/><polyline points="1284,829.5 1310,829.5" stroke="#ffae42" stroke-width="12"/></g>
<g><rect x="15.2" y="941.25" width="84" height="68.75" rx="0" fill="#84c0ae"/><circle cx="57.2" cy="941.25" r="42" fill="#84c0ae"/><circle cx="57.2" cy="1033" r="60" fill="#84c0ae"/><circle cx="57.2" cy="941.25" r="27" fill="#593080"/><circle cx="57.2" cy="1033" r="42" fill="#593080"/><rect x="155.67" y="941.25" width="84" height="68.75" rx="0" fill="#d04a88"/><circle cx="197.67" cy="941.25" r="42" fill="#e39a85"/><circle cx="197.67" cy="1033" r="60" fill="#e39a85"/><circle cx="197.67" cy="941.25" r="27" fill="#593080"/><circle cx="197.67" cy="1033" r="42" fill="#593080"/><rect x="296.14" y="941.25" width="84" height="68.75" rx="0" fill="#d04a88"/><circle cx="338.14" cy="941.25" r="42" fill="#e39a85"/><circle cx="338.14" cy="1033" r="60" fill="#e39a85"/><circle cx="338.14" cy="941.25" r="27" fill="#593080"/><circle cx="338.14" cy="1033" r="42" fill="#593080"/><rect x="436.61" y="941.25" width="84" height="68.75" rx="0" fill="#d04a88"/><circle cx="478.61" cy="941.25" r="42" fill="#e39a85"/><circle cx="478.61" cy="1033" r="60" fill="#e39a85"/><circle cx="478.61" cy="941.25" r="27" fill="#593080"/><circle cx="478.61" cy="1033" r="42" fill="#593080"/><rect x="577.08" y="941.25" width="84" height="68.75" rx="0" fill="#d04a88"/><circle cx="619.08" cy="941.25" r="42" fill="#e39a85"/><circle cx="619.08" cy="1033" r="60" fill="#e39a85"/><circle cx="619.08" cy="941.25" r="27" fill="#593080"/><circle cx="619.08" cy="1033" r="42" fill="#593080"/><rect x="717.55" y="941.25" width="84" height="68.75" rx="0" fill="#d04a88"/><circle cx="759.55" cy="941.25" r="42" fill="#e39a85"/><circle cx="759.55" cy="1033" r="60" fill="#e39a85"/><circle cx="759.55" cy="941.25" r="27" fill="#593080"/><circle cx="759.55" cy="1033" r="42" fill="#593080"/><rect x="858.02" y="941.25" width="84" height="68.75" rx="0" fill="#d04a88"/><circle cx="900.02" cy="941.25" r="42" fill="#e39a85"/><circle cx="900.02" cy="1033" r="60" fill="#e39a85"/><circle cx="900.02" cy="941.25" r="27" fill="#593080"/><circle cx="900.02" cy="1033" r="42" fill="#593080"/><rect x="998.49" y="941.25" width="84" height="68.75" rx="0" fill="#d04a88"/><circle cx="1040.49" cy="941.25" r="42" fill="#e39a85"/><circle cx="1040.49" cy="1033" r="60" fill="#e39a85"/><circle cx="1040.49" cy="941.25" r="27" fill="#593080"/><circle cx="1040.49" cy="1033" r="42" fill="#593080"/><rect x="1138.96" y="941.25" width="84" height="68.75" rx="0" fill="#d04a88"/><circle cx="1180.96" cy="941.25" r="42" fill="#e39a85"/><circle cx="1180.96" cy="1033" r="60" fill="#e39a85"/><circle cx="1180.96" cy="941.25" r="27" fill="#593080"/><circle cx="1180.96" cy="1033" r="42" fill="#593080"/><rect x="1279.43" y="941.25" width="84" height="68.75" rx="0" fill="#d04a88"/><circle cx="1321.43" cy="941.25" r="42" fill="#e39a85"/><circle cx="1321.43" cy="1033" r="60" fill="#e39a85"/><circle cx="1321.43" cy="941.25" r="27" fill="#593080"/><circle cx="1321.43" cy="1033" r="42" fill="#593080"/><rect x="1419.9" y="941.25" width="84" height="68.75" rx="0" fill="#d04a88"/><circle cx="1461.9" cy="941.25" r="42" fill="#e39a85"/><circle cx="1461.9" cy="1033" r="60" fill="#e39a85"/><circle cx="1461.9" cy="941.25" r="27" fill="#593080"/><circle cx="1461.9" cy="1033" r="42" fill="#593080"/><rect x="1560.37" y="941.25" width="84" height="68.75" rx="0" fill="#d04a88"/><circle cx="1602.37" cy="941.25" r="42" fill="#e39a85"/><circle cx="1602.37" cy="1033" r="60" fill="#e39a85"/><circle cx="1602.37" cy="941.25" r="27" fill="#593080"/><circle cx="1602.37" cy="1033" r="42" fill="#593080"/><circle cx="57.2" cy="98" r="42" fill="#e39a85"/><circle cx="197.67" cy="98" r="42" fill="#84c0ae"/><circle cx="338.14" cy="98" r="42" fill="#ee9090"/><circle cx="478.61" cy="98" r="42" fill="#e39a85"/><circle cx="619.08" cy="98" r="42" fill="#e39a85"/><circle cx="759.55" cy="98" r="42" fill="#e39a85"/><circle cx="900.02" cy="98" r="42" fill="#e39a85"/><circle cx="1040.49" cy="98" r="42" fill="#e39a85"/><circle cx="1180.96" cy="98" r="42" fill="#e39a85"/><circle cx="1321.43" cy="98" r="42" fill="#e39a85"/><circle cx="1461.9" cy="98" r="42" fill="#e39a85"/><circle cx="1602.37" cy="98" r="42" fill="#e39a85"/><rect x="20" y="254.5" width="84" height="54.5" rx="27.5" fill="#e39a85"/><rect x="20" y="265" width="72.5" height="33" rx="16.5" fill="#593080"/><rect x="20" y="732.5" width="84" height="54.25" rx="27.5" fill="#e39a85"/><rect x="20" y="743.75" width="72.5" height="32.5" rx="16.5" fill="#593080"/><rect x="233" y="254.5" width="116" height="54.5" rx="27.5" fill="#e39a85"/><rect x="244" y="265" width="94" height="33" rx="16.5" fill="#593080"/><rect x="233" y="732.5" width="116" height="54.25" rx="27.5" fill="#e39a85"/><rect x="244" y="743.75" width="94" height="32.5" rx="16.5" fill="#593080"/><circle cx="261.25" cy="360" r="18" fill="#659fe5"/><circle cx="261.25" cy="679.5" r="18" fill="#659fe5"/><rect x="108.75" y="184.5" width="34.25" height="50.5" rx="9" fill="#d04a88"/><rect x="192" y="184.5" width="34" height="50.5" rx="9" fill="#d04a88"/><rect x="242.5" y="182.5" width="27" height="33.25" rx="7" fill="#d04a88"/><rect x="297.5" y="182.5" width="28" height="33.25" rx="7" fill="#ee9090"/><rect x="347.5" y="182.5" width="28" height="33.25" rx="7" fill="#d04a88"/><rect x="402.5" y="182.5" width="28" height="33.25" rx="7" fill="#d04a88"/><rect x="452.5" y="182.5" width="28" height="33.25" rx="7" fill="#d04a88"/><rect x="423.5" y="252" width="20" height="21" rx="5" fill="#d04a88"/><rect x="423.5" y="288" width="20" height="21.5" rx="5" fill="#d04a88"/><rect x="423.5" y="323" width="20" height="22" rx="5" fill="#d04a88"/><rect x="455" y="254.5" width="55.6" height="88.2" rx="0" fill="#84c0ae"/><rect x="301" y="324" width="80" height="32" rx="4" fill="#84c0ae"/><rect x="301" y="369" width="80" height="32" rx="4" fill="#d04a88"/><rect x="507.5" y="182.5" width="27.5" height="33.25" rx="7" fill="#84c0ae"/><rect x="590.5" y="182.5" width="28" height="33.25" rx="7" fill="#ee9090"/><rect x="645.5" y="182.5" width="28.25" height="33.25" rx="7" fill="#d04a88"/><rect x="704" y="173.75" width="49.75" height="56.25" rx="11" fill="#d04a88"/><rect x="776" y="173.75" width="49.5" height="56.25" rx="11" fill="#ee9090"/><rect x="643.75" y="240.5" width="32.5" height="27.5" rx="7" fill="#ee9090"/><rect x="522" y="252.5" width="20" height="20" rx="5" fill="#7fc7ab"/><rect x="568.25" y="235" width="50.5" height="33.75" rx="9" fill="#84c0ae"/><rect x="643.75" y="295.75" width="32.5" height="27.25" rx="7" fill="#84c0ae"/><rect x="704.25" y="268" width="49.5" height="55.75" rx="11" fill="#84c0ae"/><rect x="776.25" y="268" width="49.25" height="55.75" rx="11" fill="#d04a88"/><rect x="521.25" y="287.5" width="21.25" height="22" rx="5" fill="#d04a88"/><rect x="568.25" y="318.25" width="50.5" height="33.75" rx="9" fill="#ee9090"/><rect x="521" y="324" width="21" height="21" rx="5" fill="#ee9488"/><rect x="565.6" y="367.5" width="33.8" height="28.1" rx="7" fill="#84c0ae"/><rect x="622.5" y="367.5" width="31.25" height="28" rx="7" fill="#d04a88"/><rect x="688" y="373.75" width="37.5" height="43.75" rx="9" fill="#d04a88"/><rect x="749.25" y="373.75" width="37" height="43.75" rx="9" fill="#d04a88"/><rect x="908.5" y="366.25" width="309.5" height="308.75" rx="15" fill="#84c0ae"/><rect x="881.75" y="235.5" width="32.5" height="27" rx="7" fill="#d04a88"/><rect x="903.75" y="315.75" width="16" height="33" rx="4" fill="#d04a88"/><rect x="903.75" y="692" width="16" height="31.75" rx="4" fill="#d04a88"/><rect x="931.4" y="315.75" width="16" height="33" rx="4" fill="#d04a88"/><rect x="931.4" y="692" width="16" height="31.75" rx="4" fill="#d04a88"/><rect x="959.05" y="315.75" width="16" height="33" rx="4" fill="#d04a88"/><rect x="959.05" y="692" width="16" height="31.75" rx="4" fill="#d04a88"/><rect x="986.7" y="315.75" width="16" height="33" rx="4" fill="#d04a88"/><rect x="986.7" y="692" width="16" height="31.75" rx="4" fill="#d04a88"/><rect x="1014.35" y="315.75" width="16" height="33" rx="4" fill="#d04a88"/><rect x="1014.35" y="692" width="16" height="31.75" rx="4" fill="#f0c4a8"/><rect x="1042" y="315.75" width="16" height="33" rx="4" fill="#d04a88"/><rect x="1042" y="692" width="16" height="31.75" rx="4" fill="#d04a88"/><rect x="1069.65" y="315.75" width="16" height="33" rx="4" fill="#f0c4a8"/><rect x="1069.65" y="692" width="16" height="31.75" rx="4" fill="#d04a88"/><rect x="1097.3" y="315.75" width="16" height="33" rx="4" fill="#d04a88"/><rect x="1097.3" y="692" width="16" height="31.75" rx="4" fill="#d04a88"/><rect x="1124.95" y="315.75" width="16" height="33" rx="4" fill="#d04a88"/><rect x="1124.95" y="692" width="16" height="31.75" rx="4" fill="#d04a88"/><rect x="1152.6" y="315.75" width="16" height="33" rx="4" fill="#d04a88"/><rect x="1152.6" y="692" width="16" height="31.75" rx="4" fill="#d04a88"/><rect x="1180.25" y="315.75" width="16" height="33" rx="4" fill="#d04a88"/><rect x="1180.25" y="692" width="16" height="31.75" rx="4" fill="#d04a88"/><rect x="1207.9" y="315.75" width="16" height="33" rx="4" fill="#d04a88"/><rect x="1207.9" y="692" width="16" height="31.75" rx="4" fill="#d04a88"/><rect x="860" y="359.7" width="32.5" height="16.5" rx="4" fill="#d04a88"/><rect x="1236.25" y="359.7" width="32.5" height="16.5" rx="4" fill="#d04a88"/><rect x="860" y="387.42" width="32.5" height="16.5" rx="4" fill="#97b4ff"/><rect x="1236.25" y="387.42" width="32.5" height="16.5" rx="4" fill="#d04a88"/><rect x="860" y="415.14" width="32.5" height="16.5" rx="4" fill="#d04a88"/><rect x="1236.25" y="415.14" width="32.5" height="16.5" rx="4" fill="#ee9488"/><rect x="860" y="442.86" width="32.5" height="16.5" rx="4" fill="#d04a88"/><rect x="1236.25" y="442.86" width="32.5" height="16.5" rx="4" fill="#d04a88"/><rect x="860" y="470.58" width="32.5" height="16.5" rx="4" fill="#d04a88"/><rect x="1236.25" y="470.58" width="32.5" height="16.5" rx="4" fill="#d04a88"/><rect x="860" y="498.3" width="32.5" height="16.5" rx="4" fill="#97b4ff"/><rect x="1236.25" y="498.3" width="32.5" height="16.5" rx="4" fill="#d04a88"/><rect x="860" y="526.02" width="32.5" height="16.5" rx="4" fill="#d04a88"/><rect x="1236.25" y="526.02" width="32.5" height="16.5" rx="4" fill="#d04a88"/><rect x="860" y="553.74" width="32.5" height="16.5" rx="4" fill="#d04a88"/><rect x="1236.25" y="553.74" width="32.5" height="16.5" rx="4" fill="#d04a88"/><rect x="860" y="581.46" width="32.5" height="16.5" rx="4" fill="#d04a88"/><rect x="1236.25" y="581.46" width="32.5" height="16.5" rx="4" fill="#d04a88"/><rect x="860" y="609.18" width="32.5" height="16.5" rx="4" fill="#d04a88"/><rect x="1236.25" y="609.18" width="32.5" height="16.5" rx="4" fill="#d04a88"/><rect x="860" y="636.9" width="32.5" height="16.5" rx="4" fill="#d04a88"/><rect x="1236.25" y="636.9" width="32.5" height="16.5" rx="4" fill="#d04a88"/><rect x="860" y="664.62" width="32.5" height="16.5" rx="4" fill="#d04a88"/><rect x="1236.25" y="664.62" width="32.5" height="16.5" rx="4" fill="#d04a88"/><rect x="881.75" y="179.5" width="32" height="28" rx="7" fill="#84c0ae"/><rect x="958.75" y="179.5" width="33.5" height="28" rx="7" fill="#84c0ae"/><rect x="958.75" y="235.5" width="33.5" height="27" rx="7" fill="#f0c4a8"/><rect x="1013.75" y="179.5" width="33.5" height="28" rx="7" fill="#84c0ae"/><rect x="1013.75" y="235.5" width="33.5" height="27" rx="7" fill="#f0c4a8"/><rect x="1069.5" y="179.5" width="33.5" height="28" rx="7" fill="#84c0ae"/><rect x="1069.5" y="235.5" width="33.5" height="27" rx="7" fill="#f0c4a8"/><rect x="1124.5" y="179.5" width="33.5" height="28" rx="7" fill="#f0c4a8"/><rect x="1179.5" y="179.5" width="33.75" height="28" rx="7" fill="#84c0ae"/><rect x="1238.25" y="173.75" width="49.75" height="34.25" rx="9" fill="#84c0ae"/><rect x="1124.5" y="235.5" width="33" height="27" rx="7" fill="#d04a88"/><rect x="1179.5" y="235.5" width="33.75" height="27" rx="7" fill="#d04a88"/><rect x="1238.25" y="257" width="49.75" height="34.25" rx="9" fill="#d04a88"/><rect x="1334.5" y="179.5" width="33.75" height="28" rx="7" fill="#ee9090"/><rect x="1406.25" y="180" width="33.75" height="108" rx="9" fill="#ee9090"/><rect x="1334.5" y="235.5" width="33.75" height="27" rx="7" fill="#84c0ae"/><rect x="1334.5" y="295.75" width="33.75" height="27.25" rx="7" fill="#84c0ae"/><rect x="1334.5" y="352" width="33.75" height="28" rx="7" fill="#d04a88"/><rect x="1476.25" y="180" width="33.75" height="108" rx="9" fill="#d04a88"/><rect x="1547" y="180" width="33.75" height="108" rx="9" fill="#d04a88"/><rect x="1617" y="180" width="33.75" height="108" rx="9" fill="#d04a88"/><rect x="301" y="415" width="80" height="16.3" rx="4" fill="#d04a88"/><rect x="301" y="442.72" width="80" height="16.3" rx="4" fill="#d04a88"/><rect x="301" y="470.44" width="80" height="16.3" rx="4" fill="#97b4ff"/><rect x="301" y="498.16" width="80" height="16.3" rx="4" fill="#97b4ff"/><rect x="301" y="525.88" width="80" height="16.3" rx="4" fill="#97b4ff"/><rect x="301" y="553.6" width="80" height="16.3" rx="4" fill="#97b4ff"/><rect x="301" y="581.32" width="80" height="16.3" rx="4" fill="#d04a88"/><rect x="301" y="609.04" width="80" height="16.3" rx="4" fill="#d04a88"/><rect x="301" y="639.5" width="80" height="33" rx="4" fill="#d04a88"/><rect x="428.25" y="480.5" width="26" height="19.5" rx="5" fill="#97b4ff"/><rect x="428.25" y="539.5" width="26" height="20.5" rx="5" fill="#97b4ff"/><rect x="419.4" y="384.4" width="33.1" height="50.6" rx="9" fill="#d04a88"/><rect x="502.25" y="384.4" width="34" height="50.6" rx="9" fill="#84c0ae"/><rect x="419.25" y="511.75" width="35.75" height="17" rx="5" fill="#84c0ae"/><rect x="424.5" y="603.75" width="28" height="32.5" rx="7" fill="#d04a88"/><rect x="479.25" y="603.75" width="28.25" height="32.5" rx="7" fill="#84c0ae"/><rect x="565.6" y="423.75" width="33.8" height="28.15" rx="8" fill="#d04a88"/><rect x="621.75" y="423.75" width="32.75" height="27.5" rx="8" fill="#97b4ff"/><rect x="521.75" y="480.5" width="27" height="19.5" rx="5" fill="#97b4ff"/><rect x="580" y="475.5" width="27.5" height="34" rx="8" fill="#97b4ff"/><rect x="634.5" y="475.5" width="28" height="34" rx="8" fill="#97b4ff"/><rect x="688" y="468.25" width="37.5" height="43.5" rx="9" fill="#ee9090"/><rect x="749.25" y="468.25" width="37" height="43.5" rx="9" fill="#d04a88"/><rect x="521.75" y="511.75" width="35.75" height="17" rx="5" fill="#d04a88"/><rect x="521.75" y="539.5" width="27" height="20.5" rx="5" fill="#97b4ff"/><rect x="580" y="531.75" width="27.5" height="32.5" rx="8" fill="#97b4ff"/><rect x="634.5" y="531.75" width="28" height="32.5" rx="8" fill="#97b4ff"/><rect x="689.5" y="550.5" width="20" height="21.5" rx="5" fill="#d04a88"/><rect x="689.5" y="586.75" width="20" height="21.5" rx="5" fill="#d04a88"/><rect x="689.5" y="622.5" width="20" height="21.5" rx="5" fill="#d04a88"/><rect x="720.6" y="553.1" width="55.65" height="88.8" rx="0" fill="#84c0ae"/><rect x="788" y="550.6" width="20" height="21.9" rx="5" fill="#82c2ad"/><rect x="787.5" y="586.75" width="20" height="21.5" rx="5" fill="#d04a88"/><rect x="787.5" y="622.5" width="20" height="21.25" rx="5" fill="#f0c4a8"/><rect x="552" y="595" width="33" height="50" rx="9" fill="#84c0ae"/><rect x="635" y="595" width="33" height="50" rx="9" fill="#d04a88"/><rect x="1334.5" y="412.5" width="33.75" height="27" rx="7" fill="#ee9090"/><rect x="1406.25" y="454.25" width="33.75" height="107.75" rx="9" fill="#d04a88"/><rect x="1334.5" y="467.5" width="33.75" height="27.5" rx="7" fill="#84c0ae"/><rect x="1302.5" y="605.5" width="42" height="28.25" rx="8" fill="#d04a88"/><rect x="1378.25" y="605.5" width="189.25" height="238.25" rx="9" fill="#d04a88"/><rect x="1476.25" y="454.25" width="33.75" height="107.75" rx="9" fill="#d04a88"/><rect x="1547" y="454.25" width="33.75" height="107.75" rx="9" fill="#d04a88"/><rect x="1617" y="454.25" width="34.25" height="107.75" rx="9" fill="#84c0ae"/><rect x="1602" y="606.25" width="41.75" height="27.5" rx="8" fill="#84c0ae"/><rect x="301" y="683.25" width="80" height="33" rx="4" fill="#84c0ae"/><rect x="422" y="688" width="55" height="38.25" rx="9" fill="#84c0ae"/><rect x="361.25" y="832.5" width="33.25" height="28.25" rx="7" fill="#84c0ae"/><rect x="361.25" y="777.5" width="33.25" height="28.25" rx="7" fill="#d04a88"/><rect x="108.75" y="805" width="34.25" height="50" rx="9" fill="#d04a88"/><rect x="192" y="805" width="34.25" height="50" rx="9" fill="#d04a88"/><rect x="242.5" y="824.5" width="27" height="33" rx="7" fill="#d04a88"/><rect x="297.5" y="824.5" width="28" height="33" rx="7" fill="#ee9090"/><rect x="422" y="812" width="55" height="38" rx="9" fill="#d04a88"/><rect x="677" y="688" width="55" height="38.25" rx="9" fill="#84c0ae"/><rect x="762.5" y="761.25" width="49.5" height="32.5" rx="9" fill="#84c0ae"/><rect x="762.5" y="678" width="49.5" height="32.75" rx="9" fill="#f0c4a8"/><rect x="677" y="812" width="55" height="38" rx="9" fill="#d04a88"/><rect x="756.25" y="824.5" width="28.25" height="33" rx="7" fill="#d04a88"/><rect x="811.25" y="824.5" width="28.25" height="33" rx="7" fill="#d04a88"/><rect x="903.75" y="777.5" width="32.5" height="28.25" rx="7" fill="#d04a88"/><rect x="903.75" y="832.5" width="32.5" height="28.25" rx="7" fill="#84c0ae"/><rect x="997.5" y="777.5" width="33.5" height="28.25" rx="7" fill="#f0c4a8"/><rect x="997.5" y="832.5" width="33.5" height="28.25" rx="7" fill="#84c0ae"/><rect x="1052.5" y="777.5" width="33.5" height="28.25" rx="7" fill="#f0c4a8"/><rect x="1052.5" y="832.5" width="33.5" height="28.25" rx="7" fill="#84c0ae"/><rect x="1107.5" y="777.5" width="33.5" height="28.25" rx="7" fill="#f0c4a8"/><rect x="1107.5" y="832.5" width="33.5" height="28.25" rx="7" fill="#84c0ae"/><rect x="1302.5" y="675.5" width="42" height="28.25" rx="8" fill="#d04a88"/><rect x="1302.5" y="746.25" width="42" height="27.5" rx="8" fill="#d04a88"/><rect x="1302.5" y="816.25" width="42" height="28.25" rx="8" fill="#ee9090"/><rect x="1602" y="675.5" width="41.75" height="28" rx="8" fill="#d04a88"/><rect x="1602" y="746.25" width="41.75" height="28" rx="8" fill="#d04a88"/><rect x="1602" y="816.25" width="41.75" height="28" rx="8" fill="#d04a88"/></g>
<g><circle cx="377.8" cy="254.5" r="14" fill="#ffae42"/><circle cx="377.8" cy="254.5" r="6.3" fill="#e8b038"/><circle cx="377.5" cy="298.1" r="14" fill="#4dfa76"/><circle cx="377.5" cy="298.1" r="6.3" fill="#e8b432"/><circle cx="565" cy="199.5" r="14" fill="#ffae42"/><circle cx="565" cy="199.5" r="6.3" fill="#e8b038"/><circle cx="593.25" cy="293.75" r="14" fill="#ffae42"/><circle cx="593.25" cy="293.75" r="6.3" fill="#e8b038"/><circle cx="985.5" cy="442.5" r="8" fill="#593080"/><circle cx="985.5" cy="520.5" r="8" fill="#593080"/><circle cx="985.5" cy="597.5" r="8" fill="#593080"/><circle cx="1063.25" cy="442.5" r="8" fill="#593080"/><circle cx="1063.25" cy="520.5" r="8" fill="#593080"/><circle cx="1063.25" cy="597.5" r="8" fill="#593080"/><circle cx="1141.25" cy="442.5" r="8" fill="#593080"/><circle cx="1141.25" cy="520.5" r="8" fill="#593080"/><circle cx="1141.25" cy="597.5" r="8" fill="#593080"/><circle cx="936.25" cy="193.25" r="14" fill="#4dfa76"/><circle cx="936.25" cy="193.25" r="6.3" fill="#e8b432"/><circle cx="936.25" cy="232.5" r="14" fill="#fffd6e"/><circle cx="936.25" cy="232.5" r="6.3" fill="#e8b432"/><circle cx="1262.5" cy="232.5" r="14" fill="#4dfa76"/><circle cx="1262.5" cy="232.5" r="6.3" fill="#e8b432"/><circle cx="1385" cy="221.25" r="14" fill="#ffae42"/><circle cx="1385" cy="221.25" r="6.3" fill="#e8b038"/><circle cx="1390.75" cy="309.25" r="14" fill="#4dfa76"/><circle cx="1390.75" cy="309.25" r="6.3" fill="#e8b432"/><circle cx="278.25" cy="478.5" r="14" fill="#6ae6ff"/><circle cx="278.25" cy="478.5" r="6.3" fill="#e8b432"/><circle cx="278.25" cy="561.5" r="14" fill="#6ae6ff"/><circle cx="278.25" cy="561.5" r="6.3" fill="#e8b432"/><circle cx="493.5" cy="365.6" r="14" fill="#4dfa76"/><circle cx="493.5" cy="365.6" r="6.3" fill="#e8b432"/><circle cx="488.75" cy="542.5" r="14" fill="#4dfa76"/><circle cx="488.75" cy="542.5" r="6.3" fill="#e8b432"/><circle cx="706.75" cy="442.5" r="14" fill="#ffae42"/><circle cx="706.75" cy="442.5" r="6.3" fill="#e8b038"/><circle cx="532.5" cy="586.25" r="14" fill="#4dfa76"/><circle cx="532.5" cy="586.25" r="6.3" fill="#e8b432"/><circle cx="1296.25" cy="423.25" r="14" fill="#ffae42"/><circle cx="1296.25" cy="423.25" r="6.3" fill="#e8b038"/><circle cx="1351.25" cy="514.25" r="14" fill="#4dfa76"/><circle cx="1351.25" cy="514.25" r="6.3" fill="#e8b432"/><circle cx="1633.25" cy="586.25" r="14" fill="#4dfa76"/><circle cx="1633.25" cy="586.25" r="6.3" fill="#e8b432"/><circle cx="377.4" cy="741.5" r="14" fill="#4dfa76"/><circle cx="377.4" cy="741.5" r="6.3" fill="#e8b432"/><circle cx="283.25" cy="810.5" r="14" fill="#ffae42"/><circle cx="283.25" cy="810.5" r="6.3" fill="#e8b038"/><circle cx="748.5" cy="663.5" r="14" fill="#4dfa76"/><circle cx="748.5" cy="663.5" r="6.3" fill="#e8b432"/><circle cx="831.75" cy="719.25" r="14" fill="#fffd6e"/><circle cx="831.75" cy="719.25" r="6.3" fill="#e8b432"/><circle cx="676.25" cy="769.5" r="14" fill="#ffae42"/><circle cx="676.25" cy="769.5" r="6.3" fill="#e8b038"/><circle cx="881.25" cy="846.25" r="14" fill="#4dfa76"/><circle cx="881.25" cy="846.25" r="6.3" fill="#e8b432"/><circle cx="1163.75" cy="791.25" r="14" fill="#fffd6e"/><circle cx="1163.75" cy="791.25" r="6.3" fill="#e8b432"/><circle cx="1163.75" cy="846.25" r="14" fill="#4dfa76"/><circle cx="1163.75" cy="846.25" r="6.3" fill="#e8b432"/><circle cx="1284" cy="828.5" r="14" fill="#ffae42"/><circle cx="1284" cy="828.5" r="6.3" fill="#e8b038"/></g>
<g><circle cx="239.5" cy="520.5" r="13.9" fill="#ececec"/><circle cx="239.5" cy="520.5" r="7.4" fill="#e3b72e"/><circle cx="687.5" cy="154.25" r="13.9" fill="#ececec"/><circle cx="687.5" cy="154.25" r="7.4" fill="#e3b72e"/><circle cx="864.5" cy="221.25" r="13.9" fill="#ececec"/><circle cx="864.5" cy="221.25" r="7.4" fill="#e3b72e"/><circle cx="875.5" cy="332.5" r="13.9" fill="#ececec"/><circle cx="875.5" cy="332.5" r="7.4" fill="#e3b72e"/><circle cx="1011.25" cy="287" r="13.9" fill="#ececec"/><circle cx="1011.25" cy="287" r="7.4" fill="#e3b72e"/><circle cx="1047.5" cy="287" r="13.9" fill="#ececec"/><circle cx="1047.5" cy="287" r="7.4" fill="#e3b72e"/><circle cx="1146.25" cy="287" r="13.9" fill="#ececec"/><circle cx="1146.25" cy="287" r="7.4" fill="#e3b72e"/><circle cx="1182.5" cy="287" r="13.9" fill="#ececec"/><circle cx="1182.5" cy="287" r="7.4" fill="#e3b72e"/><circle cx="1246.25" cy="332.5" r="13.9" fill="#ececec"/><circle cx="1246.25" cy="332.5" r="7.4" fill="#e3b72e"/><circle cx="1296.25" cy="367.5" r="13.9" fill="#ececec"/><circle cx="1296.25" cy="367.5" r="7.4" fill="#e3b72e"/><circle cx="1456.25" cy="376.25" r="13.9" fill="#ececec"/><circle cx="1456.25" cy="376.25" r="7.4" fill="#e3b72e"/><circle cx="1533.75" cy="304.25" r="13.9" fill="#ececec"/><circle cx="1533.75" cy="304.25" r="7.4" fill="#e3b72e"/><circle cx="1605.5" cy="376.25" r="13.9" fill="#ececec"/><circle cx="1605.5" cy="376.25" r="7.4" fill="#e3b72e"/><circle cx="1633.25" cy="348.25" r="13.9" fill="#ececec"/><circle cx="1633.25" cy="348.25" r="7.4" fill="#e3b72e"/><circle cx="1661.5" cy="376.25" r="13.9" fill="#ececec"/><circle cx="1661.5" cy="376.25" r="7.4" fill="#e3b72e"/><circle cx="477.5" cy="409.4" r="13.9" fill="#ececec"/><circle cx="477.5" cy="409.4" r="7.4" fill="#e3b72e"/><circle cx="488.25" cy="497.5" r="13.9" fill="#ececec"/><circle cx="488.25" cy="497.5" r="7.4" fill="#e3b72e"/><circle cx="831.25" cy="528.25" r="13.9" fill="#ececec"/><circle cx="831.25" cy="528.25" r="7.4" fill="#e3b72e"/><circle cx="831.25" cy="564.25" r="13.9" fill="#ececec"/><circle cx="831.25" cy="564.25" r="7.4" fill="#e3b72e"/><circle cx="831.25" cy="600" r="13.9" fill="#ececec"/><circle cx="831.25" cy="600" r="7.4" fill="#e3b72e"/><circle cx="831.25" cy="635.75" r="13.9" fill="#ececec"/><circle cx="831.25" cy="635.75" r="7.4" fill="#e3b72e"/><circle cx="610.5" cy="586.25" r="13.9" fill="#ececec"/><circle cx="610.5" cy="586.25" r="7.4" fill="#e3b72e"/><circle cx="1428.25" cy="431.25" r="13.9" fill="#ececec"/><circle cx="1428.25" cy="431.25" r="7.4" fill="#e3b72e"/><circle cx="1296.25" cy="514.25" r="13.9" fill="#ececec"/><circle cx="1296.25" cy="514.25" r="7.4" fill="#e3b72e"/><circle cx="1296.25" cy="586.25" r="13.9" fill="#ececec"/><circle cx="1296.25" cy="586.25" r="7.4" fill="#e3b72e"/><circle cx="1323.5" cy="658.5" r="13.9" fill="#ececec"/><circle cx="1323.5" cy="658.5" r="7.4" fill="#e3b72e"/><circle cx="538.25" cy="686.25" r="13.9" fill="#ececec"/><circle cx="538.25" cy="686.25" r="7.4" fill="#e3b72e"/><circle cx="665.5" cy="669.5" r="13.9" fill="#ececec"/><circle cx="665.5" cy="669.5" r="7.4" fill="#e3b72e"/><circle cx="510.5" cy="719.25" r="13.9" fill="#ececec"/><circle cx="510.5" cy="719.25" r="7.4" fill="#e3b72e"/><circle cx="648.25" cy="719.25" r="13.9" fill="#ececec"/><circle cx="648.25" cy="719.25" r="7.4" fill="#e3b72e"/><circle cx="831.25" cy="672" r="13.9" fill="#ececec"/><circle cx="831.25" cy="672" r="7.4" fill="#e3b72e"/><circle cx="587.5" cy="796.25" r="13.9" fill="#ececec"/><circle cx="587.5" cy="796.25" r="7.4" fill="#e3b72e"/><circle cx="687.5" cy="885" r="13.9" fill="#ececec"/><circle cx="687.5" cy="885" r="7.4" fill="#e3b72e"/><circle cx="881.25" cy="791.25" r="13.9" fill="#ececec"/><circle cx="881.25" cy="791.25" r="7.4" fill="#e3b72e"/><circle cx="991" cy="885" r="13.9" fill="#ececec"/><circle cx="991" cy="885" r="7.4" fill="#e3b72e"/><circle cx="1052.5" cy="752.5" r="13.9" fill="#ececec"/><circle cx="1052.5" cy="752.5" r="7.4" fill="#e3b72e"/><circle cx="1088.25" cy="752.5" r="13.9" fill="#ececec"/><circle cx="1088.25" cy="752.5" r="7.4" fill="#e3b72e"/><circle cx="1124.5" cy="752.5" r="13.9" fill="#ececec"/><circle cx="1124.5" cy="752.5" r="7.4" fill="#e3b72e"/><circle cx="1284.5" cy="752.5" r="13.9" fill="#ececec"/><circle cx="1284.5" cy="752.5" r="7.4" fill="#e3b72e"/><circle cx="1650" cy="863" r="13.9" fill="#ececec"/><circle cx="1650" cy="863" r="7.4" fill="#e3b72e"/></g>
<g><text x="454.7" y="456" font-size="12.5" fill="#eaa9a2" text-anchor="middle" textLength="20.5" lengthAdjust="spacingAndGlyphs">CC1</text><path d="M1615 624.5H1657M1655.5 585V665" stroke="#8d9a98" stroke-width="1" fill="none"/></g>
</svg></div>
<div class="a" style="left:1657px;top:126px;width:17px;height:899px;background:#f0f0f0"></div>
<div class="a" style="left:1657px;top:577px;width:17px;height:19px;background:#cdcdcd"></div>
<svg class="a" style="left:1660px;top:131px" width="10" height="7" viewBox="0 0 10 7"><path d="M1 6l4-4 4 4" fill="none" stroke="#454545" stroke-width="1.9"/></svg>
<svg class="a" style="left:1660px;top:996px" width="10" height="7" viewBox="0 0 10 7"><path d="M1 1l4 4 4-4" fill="none" stroke="#454545" stroke-width="1.9"/></svg>
<div class="a" style="left:38px;top:1008px;width:1619px;height:17px;background:#f0f0f0"></div>
<div class="a" style="left:874px;top:1008px;width:17px;height:17px;background:#cdcdcd"></div>
<svg class="a" style="left:43px;top:1012px" width="7" height="10" viewBox="0 0 7 10"><path d="M6 1l-4 4 4 4" fill="none" stroke="#454545" stroke-width="1.9"/></svg>
<svg class="a" style="left:1645px;top:1012px" width="7" height="10" viewBox="0 0 7 10"><path d="M1 1l4 4-4 4" fill="none" stroke="#454545" stroke-width="1.9"/></svg>
<div class="sel" style="left:1677px;top:130px;width:33px;height:33px"></div>
<div class="hsep" style="left:1678px;top:203px;width:30px"></div>
<div class="hsep" style="left:1678px;top:423px;width:30px"></div>
<div class="hsep" style="left:1678px;top:741px;width:30px"></div>
<div class="a" style="left:38px;top:125px;width:1637px;height:901px;border:1px solid #a3a3a3;pointer-events:none"></div>
<svg class="a" style="left:1675px;top:126px" width="38" height="700" viewBox="1675 126 38 700"><path d="M1687.800 138v13.300l3.300-3 2.300 4.800 2-.900-2.300-4.800h4.500z" fill="#4a4a4a"/><path d="M1681 169l24 24M1705 169l-24 24" stroke="#4a4a4a" stroke-width="1.300"/><circle cx="1693" cy="181" r="2.800" fill="#fff" stroke="#4a4a4a" stroke-width="1.200"/><path d="M1682.500 214.500h21V232h-21v-6.500a2.500 2.500 0 0 0 0-5z" fill="none" stroke="#4a4a4a" stroke-width="1.500"/><g fill="#1a81c4"><rect x="1684.500" y="211.500" width="5.300" height="6"/><rect x="1691.300" y="211.500" width="5.300" height="6"/><rect x="1698" y="211.500" width="5.300" height="6"/><rect x="1684.500" y="229" width="5.300" height="6"/><rect x="1691.300" y="229" width="5.300" height="6"/><rect x="1698" y="229" width="5.300" height="6"/></g><path d="M1682 268l6-12h9l7-7" fill="none" stroke="#1a81c4" stroke-width="2.200"/><path d="M1709 268v7h-7z" fill="#000"/><path d="M1681 295h3v-4q0-3 2.200-3t2.200 3v7q0 2 2 2t2-2v-7q0-3 2.200-3t2.200 3v7q0 2 2 2t2-2v-3h3" fill="none" stroke="#1a81c4" stroke-width="2"/><path d="M1709 303v7h-7z" fill="#000"/><circle cx="1693" cy="329" r="5" fill="none" stroke="#f5a21a" stroke-width="4.500"/><path d="M1684 375V363.500h4.500V353h14v8.500h-4a3 3 0 0 0 0 6h4V375z" fill="#1a81c4"/><circle cx="1697.500" cy="364.500" r="3.300" fill="#f0f0f0"/><path d="M1697 364.500h5" stroke="#3a3a3a" stroke-width="1.600"/><circle cx="1697.500" cy="364.500" r="1.900" fill="#3a3a3a"/><defs><pattern id="hz" width="4" height="4" patternUnits="userSpaceOnUse" patternTransform="rotate(-45)"><rect width="2" height="4" fill="#4a4a4a"/></pattern></defs><path d="M1683 408.500V398h5v-9.500h14v20z" fill="url(#hz)" stroke="#4a4a4a" stroke-width="1.200"/><path d="M1682 452l22-21" stroke="#4a4a4a" stroke-width="1.700"/><path d="M1684 487q0-19 18-21" fill="none" stroke="#4a4a4a" stroke-width="1.700"/><rect x="1684" y="503.500" width="18" height="15" fill="#b9b9b9" stroke="#4a4a4a" stroke-width="1.700"/><circle cx="1693" cy="547" r="8.500" fill="#b9b9b9" stroke="#4a4a4a" stroke-width="1.700"/><path d="M1683 573.500l19 3-2 13.500-13 .5 5-9z" fill="#b9b9b9" stroke="#4a4a4a" stroke-width="1.700" stroke-linejoin="round"/><path d="M1685 608.500h16v3.500h-6v15h-4v-15h-6z" fill="#4a4a4a"/><path d="M1686 658l14-14" stroke="#4a4a4a" stroke-width="1.300"/><path d="M1684 652l4 4M1698 640l4 4" stroke="#4a4a4a" stroke-width="1"/><circle cx="1687.500" cy="661" r="2.200" fill="#1a81c4"/><circle cx="1702.500" cy="646.500" r="2.200" fill="#1a81c4"/><path d="M1709 661v7h-7z" fill="#000"/><circle cx="1693" cy="687" r="7.500" fill="#4a4a4a"/><path d="M1681.500 687h23M1693 675.500v23" stroke="#4a4a4a" stroke-width="1.600"/><path d="M1693 679.500a7.500 7.500 0 0 1 7.500 7.500h-7.500zM1693 694.500a7.500 7.500 0 0 1-7.500-7.500h7.500z" fill="#8c8c8c"/><path d="M1685 711v17l4.200-3.700 2.800 6 2.300-1.100-2.800-5.900h5.500z" fill="#4a4a4a"/><circle cx="1699.500" cy="727" r="5.800" fill="#c8283c"/><path d="M1697 724.500l5 5M1702 724.500l-5 5" stroke="#fff" stroke-width="1.700"/><path d="M1684.500 755v19.500h17" fill="none" stroke="#4a4a4a" stroke-width="1.300"/><path d="M1682.500 758l2-4 2 4zM1699 772.500l4 2-4 2z" fill="#4a4a4a"/><path d="M1696 757v12M1690 763h12" stroke="#4a4a4a" stroke-width="1"/><path d="M1696 759.500l3.500 3.500-3.500 3.500-3.500-3.500z" fill="#4a4a4a"/><path d="M1709 774v7h-7z" fill="#000"/><g transform="rotate(-40 1693 800)"><rect x="1681" y="795.500" width="24" height="9" fill="none" stroke="#4a4a4a" stroke-width="1.700"/><path d="M1686 796v4M1690.500 796v4M1695 796v4M1699.500 796v4" stroke="#4a4a4a" stroke-width="1.200"/></g></svg>
<div class="a" style="left:1712px;top:126px;width:4px;height:899px;background:#dedede"></div>
<div class="a" style="left:1716px;top:126px;width:202px;height:19px;background:#bfbfbf"></div>
<div class="t" style="left:1719px;top:128px;">Appearance</div>
<div class="a" style="left:1717px;top:145px;width:51px;height:24px;background:#fff;border:1px solid #dcdcdc;border-bottom:none"></div>
<div class="a" style="left:1768px;top:148px;width:50px;height:20px;border:1px solid #dcdcdc;border-left:none"></div>
<div class="a" style="left:1818px;top:148px;width:46px;height:20px;border:1px solid #dcdcdc;border-left:none"></div>
<div class="t" style="left:1723px;top:150px;">Layers</div><div class="t" style="left:1772px;top:151px;">Objects</div><div class="t" style="left:1824px;top:151px;">Nets</div>
<div class="a" style="left:1720px;top:168px;width:196px;height:660px;border:1px solid #e3e3e3;border-bottom:none"></div>
<div class="a" style="left:1721px;top:314px;width:194px;height:17px;background:#e0e0e0"></div>
<div class="sw" style="left:1737px;top:174px;background:#c83434"></div>
<div class="t" style="left:1778px;top:172px;letter-spacing:-0.4px">F.Cu</div>
<div class="sw" style="left:1737px;top:192px;background:#7fc87f"></div>
<div class="t" style="left:1778px;top:190px;letter-spacing:-0.4px">In1.Cu</div>
<div class="sw" style="left:1737px;top:210px;background:#ce7d2c"></div>
<div class="t" style="left:1778px;top:208px;letter-spacing:-0.4px">In2.Cu</div>
<div class="sw" style="left:1737px;top:228px;background:#4d7fc4"></div>
<div class="t" style="left:1778px;top:226px;letter-spacing:-0.4px">B.Cu</div>
<div class="sw" style="left:1737px;top:246px;background:#b4a09a"></div>
<div class="t" style="left:1778px;top:244px;letter-spacing:-0.4px">F.Paste</div>
<div class="sw" style="left:1737px;top:264px;background:#00c2c2"></div>
<div class="t" style="left:1778px;top:262px;letter-spacing:-0.4px">B.Paste</div>
<div class="sw" style="left:1737px;top:282px;background:#f2eda1"></div>
<div class="t" style="left:1778px;top:280px;letter-spacing:-0.4px">F.Silkscreen</div>
<div class="sw" style="left:1737px;top:300px;background:#e8b2a7"></div>
<div class="t" style="left:1778px;top:298px;letter-spacing:-0.4px">B.Silkscreen</div>
<div class="sw" style="left:1737px;top:318px;background:#d864ff"></div>
<div class="t" style="left:1778px;top:316px;letter-spacing:-0.4px">F.Mask</div>
<div class="sw" style="left:1737px;top:336px;background:#02ffee"></div>
<div class="t" style="left:1778px;top:334px;letter-spacing:-0.4px">B.Mask</div>
<div class="sw" style="left:1737px;top:354px;background:#c2c2c2"></div>
<div class="t" style="left:1778px;top:352px;letter-spacing:-0.4px">User.Drawings</div>
<div class="sw" style="left:1737px;top:372px;background:#5994dc"></div>
<div class="t" style="left:1778px;top:370px;letter-spacing:-0.4px">User.Comments</div>
<div class="sw" style="left:1737px;top:390px;background:#b4dbd2"></div>
<div class="t" style="left:1778px;top:388px;letter-spacing:-0.4px">User.Eco1</div>
<div class="sw" style="left:1737px;top:408px;background:#d8c852"></div>
<div class="t" style="left:1778px;top:406px;letter-spacing:-0.4px">User.Eco2</div>
<div class="sw" style="left:1737px;top:426px;background:#d0d2cd"></div>
<div class="t" style="left:1778px;top:424px;letter-spacing:-0.4px">Edge.Cuts</div>
<div class="sw" style="left:1737px;top:444px;background:#ff26e2"></div>
<div class="t" style="left:1778px;top:442px;letter-spacing:-0.4px">Margin</div>
<div class="sw" style="left:1737px;top:462px;background:#ff26e2"></div>
<div class="t" style="left:1778px;top:460px;letter-spacing:-0.4px">F.Courtyard</div>
<div class="sw" style="left:1737px;top:480px;background:#26e9ff"></div>
<div class="t" style="left:1778px;top:478px;letter-spacing:-0.4px">B.Courtyard</div>
<div class="sw" style="left:1737px;top:498px;background:#afafaf"></div>
<div class="t" style="left:1778px;top:496px;letter-spacing:-0.4px">F.Fab</div>
<div class="sw" style="left:1737px;top:516px;background:#585d84"></div>
<div class="t" style="left:1778px;top:514px;letter-spacing:-0.4px">B.Fab</div>
<svg class="a" style="left:1720px;top:168px" width="60" height="370" viewBox="1720 168 60 370"><circle cx="1764.5" cy="179" r="7.8" fill="#4a4a4a"/><path d="M1758.5 179q6 -5.5 12 0q-6 5.5 -12 0z" fill="#fff"/><circle cx="1764.5" cy="179" r="2" fill="#4a4a4a"/><circle cx="1764.5" cy="179" r="0.9" fill="#fff"/><circle cx="1764.5" cy="197" r="7.8" fill="#b4b4b4"/><path d="M1758.5 197q6 -5.5 12 0q-6 5.5 -12 0z" fill="#e8e8e8"/><path d="M1759.5 200.5l10 -7" stroke="#5a5a5a" stroke-width="1.6"/><circle cx="1764.5" cy="215" r="7.8" fill="#b4b4b4"/><path d="M1758.5 215q6 -5.5 12 0q-6 5.5 -12 0z" fill="#e8e8e8"/><path d="M1759.5 218.5l10 -7" stroke="#5a5a5a" stroke-width="1.6"/><circle cx="1764.5" cy="233" r="7.8" fill="#b4b4b4"/><path d="M1758.5 233q6 -5.5 12 0q-6 5.5 -12 0z" fill="#e8e8e8"/><path d="M1759.5 236.5l10 -7" stroke="#5a5a5a" stroke-width="1.6"/><circle cx="1764.5" cy="251" r="7.8" fill="#b4b4b4"/><path d="M1758.5 251q6 -5.5 12 0q-6 5.5 -12 0z" fill="#e8e8e8"/><path d="M1759.5 254.5l10 -7" stroke="#5a5a5a" stroke-width="1.6"/><circle cx="1764.5" cy="269" r="7.8" fill="#b4b4b4"/><path d="M1758.5 269q6 -5.5 12 0q-6 5.5 -12 0z" fill="#e8e8e8"/><path d="M1759.5 272.5l10 -7" stroke="#5a5a5a" stroke-width="1.6"/><circle cx="1764.5" cy="287" r="7.8" fill="#b4b4b4"/><path d="M1758.5 287q6 -5.5 12 0q-6 5.5 -12 0z" fill="#e8e8e8"/><path d="M1759.5 290.5l10 -7" stroke="#5a5a5a" stroke-width="1.6"/><circle cx="1764.5" cy="305" r="7.8" fill="#b4b4b4"/><path d="M1758.5 305q6 -5.5 12 0q-6 5.5 -12 0z" fill="#e8e8e8"/><path d="M1759.5 308.5l10 -7" stroke="#5a5a5a" stroke-width="1.6"/><circle cx="1764.5" cy="323" r="7.8" fill="#4a4a4a"/><path d="M1758.5 323q6 -5.5 12 0q-6 5.5 -12 0z" fill="#fff"/><circle cx="1764.5" cy="323" r="2" fill="#4a4a4a"/><circle cx="1764.5" cy="323" r="0.9" fill="#fff"/><circle cx="1764.5" cy="341" r="7.8" fill="#b4b4b4"/><path d="M1758.5 341q6 -5.5 12 0q-6 5.5 -12 0z" fill="#e8e8e8"/><path d="M1759.5 344.5l10 -7" stroke="#5a5a5a" stroke-width="1.6"/><circle cx="1764.5" cy="359" r="7.8" fill="#b4b4b4"/><path d="M1758.5 359q6 -5.5 12 0q-6 5.5 -12 0z" fill="#e8e8e8"/><path d="M1759.5 362.5l10 -7" stroke="#5a5a5a" stroke-width="1.6"/><circle cx="1764.5" cy="377" r="7.8" fill="#b4b4b4"/><path d="M1758.5 377q6 -5.5 12 0q-6 5.5 -12 0z" fill="#e8e8e8"/><path d="M1759.5 380.5l10 -7" stroke="#5a5a5a" stroke-width="1.6"/><circle cx="1764.5" cy="395" r="7.8" fill="#b4b4b4"/><path d="M1758.5 395q6 -5.5 12 0q-6 5.5 -12 0z" fill="#e8e8e8"/><path d="M1759.5 398.5l10 -7" stroke="#5a5a5a" stroke-width="1.6"/><circle cx="1764.5" cy="413" r="7.8" fill="#b4b4b4"/><path d="M1758.5 413q6 -5.5 12 0q-6 5.5 -12 0z" fill="#e8e8e8"/><path d="M1759.5 416.5l10 -7" stroke="#5a5a5a" stroke-width="1.6"/><circle cx="1764.5" cy="431" r="7.8" fill="#4a4a4a"/><path d="M1758.5 431q6 -5.5 12 0q-6 5.5 -12 0z" fill="#fff"/><circle cx="1764.5" cy="431" r="2" fill="#4a4a4a"/><circle cx="1764.5" cy="431" r="0.9" fill="#fff"/><circle cx="1764.5" cy="449" r="7.8" fill="#b4b4b4"/><path d="M1758.5 449q6 -5.5 12 0q-6 5.5 -12 0z" fill="#e8e8e8"/><path d="M1759.5 452.5l10 -7" stroke="#5a5a5a" stroke-width="1.6"/><circle cx="1764.5" cy="467" r="7.8" fill="#b4b4b4"/><path d="M1758.5 467q6 -5.5 12 0q-6 5.5 -12 0z" fill="#e8e8e8"/><path d="M1759.5 470.5l10 -7" stroke="#5a5a5a" stroke-width="1.6"/><circle cx="1764.5" cy="485" r="7.8" fill="#b4b4b4"/><path d="M1758.5 485q6 -5.5 12 0q-6 5.5 -12 0z" fill="#e8e8e8"/><path d="M1759.5 488.5l10 -7" stroke="#5a5a5a" stroke-width="1.6"/><circle cx="1764.5" cy="503" r="7.8" fill="#b4b4b4"/><path d="M1758.5 503q6 -5.5 12 0q-6 5.5 -12 0z" fill="#e8e8e8"/><path d="M1759.5 506.5l10 -7" stroke="#5a5a5a" stroke-width="1.6"/><circle cx="1764.5" cy="521" r="7.8" fill="#b4b4b4"/><path d="M1758.5 521q6 -5.5 12 0q-6 5.5 -12 0z" fill="#e8e8e8"/><path d="M1759.5 524.5l10 -7" stroke="#5a5a5a" stroke-width="1.6"/><path d="M1727 317.5l5 5 -5 5z" fill="#2a3af0"/></svg>
<div class="a" style="left:1720px;top:828px;width:196px;height:22px;background:#fff"></div>
<svg class="a" style="left:1725px;top:834px" width="6" height="9"><path d="M1 0.5l4 4 -4 4z" fill="#000"/></svg>
<div class="t" style="left:1731px;top:832px;">Layer Display Options</div>
<div class="t" style="left:1723px;top:854px;">Presets (Ctrl+Tab):</div>
<div class="combo" style="left:1722px;top:870px;width:191px;height:23px"></div><div class="t" style="left:1727px;top:875px;letter-spacing:1.2px">-----</div><svg class="a" style="left:1897px;top:878px" width="10" height="7" viewBox="0 0 10 7"><path d="M1 1l4 4 4-4" fill="none" stroke="#333" stroke-width="1.3"/></svg>
<div class="a" style="left:1716px;top:899px;width:202px;height:6px;background:#e6e6e6"></div>
<div class="a" style="left:1716px;top:906px;width:202px;height:19px;background:#bfbfbf"></div>
<div class="t" style="left:1719px;top:908px;">Selection Filter</div>
<div class="chk" style="left:1721px;top:932px"><svg width="11" height="11" viewBox="0 0 11 11" style="display:block"><path d="M1.5 5.5l3 3 5-6.5" fill="none" stroke="#222" stroke-width="1.3"/></svg></div><div class="t" style="left:1737px;top:932px;">All items</div>
<div class="chk" style="left:1813px;top:932px"><svg width="11" height="11" viewBox="0 0 11 11" style="display:block"><path d="M1.5 5.5l3 3 5-6.5" fill="none" stroke="#222" stroke-width="1.3"/></svg></div><div class="t" style="left:1829px;top:932px;">Locked items</div>
<div class="chk" style="left:1721px;top:947px"><svg width="11" height="11" viewBox="0 0 11 11" style="display:block"><path d="M1.5 5.5l3 3 5-6.5" fill="none" stroke="#222" stroke-width="1.3"/></svg></div><div class="t" style="left:1737px;top:947px;">Footprints</div>
<div class="chk" style="left:1813px;top:947px"><svg width="11" height="11" viewBox="0 0 11 11" style="display:block"><path d="M1.5 5.5l3 3 5-6.5" fill="none" stroke="#222" stroke-width="1.3"/></svg></div><div class="t" style="left:1829px;top:947px;">Text</div>
<div class="chk" style="left:1721px;top:962px"><svg width="11" height="11" viewBox="0 0 11 11" style="display:block"><path d="M1.5 5.5l3 3 5-6.5" fill="none" stroke="#222" stroke-width="1.3"/></svg></div><div class="t" style="left:1737px;top:962px;">Tracks</div>
<div class="chk" style="left:1813px;top:962px"><svg width="11" height="11" viewBox="0 0 11 11" style="display:block"><path d="M1.5 5.5l3 3 5-6.5" fill="none" stroke="#222" stroke-width="1.3"/></svg></div><div class="t" style="left:1829px;top:962px;">Vias</div>
<div class="chk" style="left:1721px;top:977px"><svg width="11" height="11" viewBox="0 0 11 11" style="display:block"><path d="M1.5 5.5l3 3 5-6.5" fill="none" stroke="#222" stroke-width="1.3"/></svg></div><div class="t" style="left:1737px;top:977px;">Pads</div>
<div class="chk" style="left:1813px;top:977px"><svg width="11" height="11" viewBox="0 0 11 11" style="display:block"><path d="M1.5 5.5l3 3 5-6.5" fill="none" stroke="#222" stroke-width="1.3"/></svg></div><div class="t" style="left:1829px;top:977px;">Graphics</div>
<div class="chk" style="left:1721px;top:992px"><svg width="11" height="11" viewBox="0 0 11 11" style="display:block"><path d="M1.5 5.5l3 3 5-6.5" fill="none" stroke="#222" stroke-width="1.3"/></svg></div><div class="t" style="left:1737px;top:992px;">Zones</div>
<div class="chk" style="left:1813px;top:992px"><svg width="11" height="11" viewBox="0 0 11 11" style="display:block"><path d="M1.5 5.5l3 3 5-6.5" fill="none" stroke="#222" stroke-width="1.3"/></svg></div><div class="t" style="left:1829px;top:992px;">Rule Areas</div>
<div class="chk" style="left:1721px;top:1007px"><svg width="11" height="11" viewBox="0 0 11 11" style="display:block"><path d="M1.5 5.5l3 3 5-6.5" fill="none" stroke="#222" stroke-width="1.3"/></svg></div><div class="t" style="left:1737px;top:1007px;">Dimensions</div>
<div class="chk" style="left:1813px;top:1007px"><svg width="11" height="11" viewBox="0 0 11 11" style="display:block"><path d="M1.5 5.5l3 3 5-6.5" fill="none" stroke="#222" stroke-width="1.3"/></svg></div><div class="t" style="left:1829px;top:1007px;">Other items</div>
<div class="t" style="left:12px;top:1027px;">Pads</div><div class="t" style="left:12px;top:1042px;">385</div>
<div class="t" style="left:66px;top:1027px;">Vias</div><div class="t" style="left:66px;top:1042px;">73</div>
<div class="t" style="left:116px;top:1027px;">Track Segments</div><div class="t" style="left:116px;top:1042px;">669</div>
<div class="t" style="left:228px;top:1027px;">Nets</div><div class="t" style="left:228px;top:1042px;">69</div>
<div class="t" style="left:281px;top:1027px;">Unrouted</div><div class="t" style="left:281px;top:1042px;">0</div>
<div class="hsep" style="left:0;top:1057px;width:1918px;background:#dcdcdc"></div>
<div class="t" style="left:4px;top:1062px;letter-spacing:0.01px">File 'C:\Users\jon\Downloads\kicad_bugs\icebreaker\hardware\bitsy-v1.1b\icebreaker-bitsy.kicad_pcb' saved.</div>
<div class="t" style="left:853px;top:1062px;">Z 15.44</div>
<div class="t" style="left:931px;top:1062px;letter-spacing:-0.5px">X 62.5000&nbsp; Y 51.9000</div>
<div class="t" style="left:1091px;top:1062px;letter-spacing:-0.5px">dx 62.5000&nbsp; dy 51.9000&nbsp; dist 81.2395</div>
<div class="t" style="left:1343px;top:1062px;letter-spacing:-0.5px">grid X 0.1000&nbsp; Y 0.1000</div>
<div class="t" style="left:1526px;top:1062px;">mm</div>
<div class="t" style="left:1592px;top:1062px;">Select item(s)</div>
<div class="sep" style="left:848px;top:1059px;height:19px;background:#d7d7d7"></div>
<div class="sep" style="left:925px;top:1059px;height:19px;background:#d7d7d7"></div>
<div class="sep" style="left:1085px;top:1059px;height:19px;background:#d7d7d7"></div>
<div class="sep" style="left:1336px;top:1059px;height:19px;background:#d7d7d7"></div>
<div class="sep" style="left:1520px;top:1059px;height:19px;background:#d7d7d7"></div>
<div class="sep" style="left:1586px;top:1059px;height:19px;background:#d7d7d7"></div>
<div class="sep" style="left:1760px;top:1059px;height:19px;background:#d7d7d7"></div>
<svg class="a" style="left:1906px;top:1067px" width="11" height="11"><g fill="#b0b0b0"><rect x="8" y="8" width="2" height="2"/><rect x="8" y="4" width="2" height="2"/><rect x="4" y="8" width="2" height="2"/><rect x="8" y="0" width="2" height="2"/><rect x="4" y="4" width="2" height="2"/><rect x="0" y="8" width="2" height="2"/></g></svg>
</body></html>
